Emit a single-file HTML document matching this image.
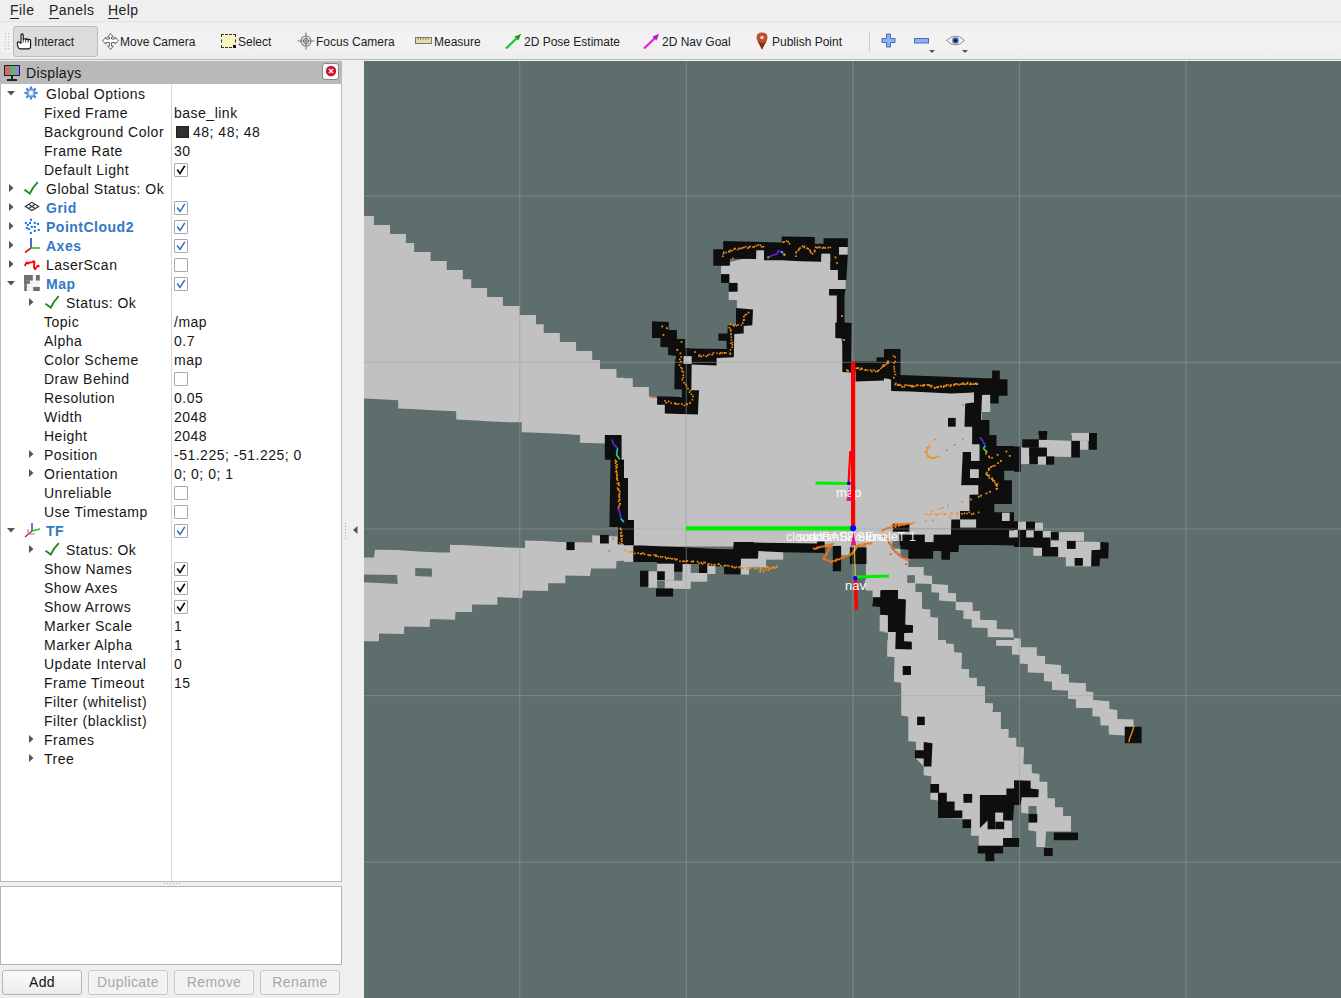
<!DOCTYPE html>
<html><head><meta charset="utf-8">
<style>
*{margin:0;padding:0}
html,body{width:1341px;height:998px;overflow:hidden;background:#efefef;position:relative;font-family:"Liberation Sans",sans-serif;color:#111}
.abs{position:absolute}
.menu{position:absolute;top:0;font-size:14px;letter-spacing:0.45px;line-height:21px;color:#222}
.menu u{text-decoration:none;border-bottom:1px solid #222}
.tb{position:absolute;top:34px;font-size:12px;line-height:16px;color:#222;white-space:nowrap}
.tt{position:absolute;font-size:14px;letter-spacing:0.5px;line-height:19px;margin-top:1px;white-space:nowrap;color:#161616}
.tt.blue{color:#3079c8;font-weight:bold;letter-spacing:0.5px}
.cb{position:absolute;width:14px;height:14px;border:1px solid #a8a8a8;box-sizing:border-box;background:#fff;border-radius:1px}
.btn{position:absolute;top:970px;height:25px;border:1px solid #b4b4b4;border-radius:3px;box-sizing:border-box;background:linear-gradient(#fbfbfb,#ececec);font-size:14px;letter-spacing:0.4px;line-height:23px;text-align:center}
</style></head><body>
<!-- menubar -->
<div class="menu" style="left:10px"><u>F</u>ile</div>
<div class="menu" style="left:49px"><u>P</u>anels</div>
<div class="menu" style="left:108px"><u>H</u>elp</div>
<div class="abs" style="left:0;top:21px;width:1341px;height:38px;background:linear-gradient(#efefef,#f3f3f3 50%,#ececec);border-top:1px solid #e2e2e2"></div>
<div class="abs" style="left:0;top:59px;width:1341px;height:1px;background:#bdbdbd"></div>
<!-- toolbar grip -->
<svg class="abs" style="left:5px;top:33px" width="6" height="18"><g fill="#b8b8b8"><rect x="0" y="0" width="1" height="1"/><rect x="3" y="0" width="1" height="1"/><rect x="0" y="3" width="1" height="1"/><rect x="3" y="3" width="1" height="1"/><rect x="0" y="6" width="1" height="1"/><rect x="3" y="6" width="1" height="1"/><rect x="0" y="9" width="1" height="1"/><rect x="3" y="9" width="1" height="1"/><rect x="0" y="12" width="1" height="1"/><rect x="3" y="12" width="1" height="1"/><rect x="0" y="15" width="1" height="1"/><rect x="3" y="15" width="1" height="1"/></g></svg>
<div class="abs" style="left:13px;top:26px;width:85px;height:31px;border:1px solid #bcbcbc;border-radius:3px;box-sizing:border-box;background:#dcdcdc"></div>
<!-- hand icon -->
<svg class="abs" style="left:16px;top:33px" width="17" height="17" viewBox="0 0 17 17"><path d="M5 9 V2 Q5 0.9 6.1 0.9 Q7.2 0.9 7.2 2 V6.6 Q7.5 5.7 8.5 5.7 Q9.5 5.7 9.7 6.7 Q10 5.9 11 5.9 Q12 6 12.2 7 Q12.5 6.3 13.4 6.4 Q14.6 6.5 14.6 7.7 V13.6 Q14.6 15.8 12.6 15.8 H4.2 Q2.4 15.8 2.1 14 L1.3 10.6 Q1.1 9.2 2.3 8.9 Q3.4 8.7 5 10.4 Z" fill="#fff" stroke="#111" stroke-width="1.15" stroke-linejoin="round"/><path d="M7.2 6.6 V9.5 M9.7 6.7 V9.5 M12.2 7 V9.5" stroke="#111" stroke-width="0.8"/></svg>
<div class="tb" style="left:34px">Interact</div>
<!-- move camera icon -->
<svg class="abs" style="left:102px;top:33px" width="17" height="17" viewBox="0 0 17 17"><g fill="#fff" stroke="#666" stroke-width="1"><path d="M8.5 0.5 L11.5 4 H9.5 V6 H13 V4 L16.5 8 L13 11 V9.5 H9.5 V13 H11.5 L8.5 16.5 L5.5 13 H7.5 V9.5 H4 V11 L0.5 8 L4 4 V6 H7.5 V4 H5.5 Z"/></g></svg>
<div class="tb" style="left:120px">Move Camera</div>
<!-- select icon -->
<div class="abs" style="left:221px;top:34px;width:15px;height:14px;background:#fbf7c0;border:1px dashed #333;box-sizing:border-box"></div>
<div class="abs" style="left:233px;top:45px;width:3px;height:3px;background:#111"></div>
<div class="tb" style="left:238px">Select</div>
<!-- focus icon -->
<svg class="abs" style="left:297px;top:32px" width="18" height="18" viewBox="0 0 18 18"><g fill="none" stroke="#777" stroke-width="1.1"><circle cx="9" cy="9" r="5"/><circle cx="9" cy="9" r="2.5"/><path d="M9 0.5 V17.5 M0.5 9 H17.5"/></g></svg>
<div class="tb" style="left:316px">Focus Camera</div>
<!-- measure icon -->
<svg class="abs" style="left:415px;top:36px" width="17" height="9" viewBox="0 0 17 9"><rect x="0.5" y="1.5" width="16" height="6" fill="#e8dca0" stroke="#777" stroke-width="1"/><path d="M3 2 V4 M5.5 2 V4 M8 2 V4 M10.5 2 V4 M13 2 V4" stroke="#777" stroke-width="0.8"/></svg>
<div class="tb" style="left:434px">Measure</div>
<!-- 2D pose icon -->
<svg class="abs" style="left:505px;top:33px" width="17" height="17" viewBox="0 0 17 17"><path d="M1 15.5 L12 5" stroke="#22c022" stroke-width="2.2"/><path d="M16 1 L9.5 3.5 L13.5 7.5 Z" fill="#1d9e1d"/></svg>
<div class="tb" style="left:524px">2D Pose Estimate</div>
<svg class="abs" style="left:643px;top:33px" width="17" height="17" viewBox="0 0 17 17"><path d="M1 15.5 L12 5" stroke="#e020e0" stroke-width="2.2"/><path d="M16 1 L9.5 3.5 L13.5 7.5 Z" fill="#c010c0"/></svg>
<div class="tb" style="left:662px">2D Nav Goal</div>
<svg class="abs" style="left:756px;top:32px" width="12" height="18" viewBox="0 0 12 18"><path d="M6 17.5 L1.5 9 Q0.5 7 0.5 5.5 Q0.5 0.5 6 0.5 Q11.5 0.5 11.5 5.5 Q11.5 7 10.5 9 Z" fill="#c0502a"/><path d="M6 17.5 L1.5 9 Q3 11 6 11 Q9 11 10.5 9 Z" fill="#7a3515"/><circle cx="6" cy="5.5" r="1.8" fill="#f0d0c0"/></svg>
<div class="tb" style="left:772px">Publish Point</div>
<div class="abs" style="left:869px;top:32px;width:1px;height:20px;background:#cfcfcf"></div>
<svg class="abs" style="left:881px;top:33px" width="15" height="15" viewBox="0 0 15 15"><path d="M5.5 1 H9.5 V5.5 H14 V9.5 H9.5 V14 H5.5 V9.5 H1 V5.5 H5.5 Z" fill="#8fb0e8" stroke="#3f6fc0" stroke-width="1"/></svg>
<svg class="abs" style="left:914px;top:38px" width="15" height="6" viewBox="0 0 15 6"><rect x="0.5" y="0.5" width="14" height="4.5" fill="#8fb0e8" stroke="#3f6fc0" stroke-width="1"/></svg>
<svg class="abs" style="left:929px;top:50px" width="6" height="4"><path d="M0 0 H6 L3 3 Z" fill="#555"/></svg>
<svg class="abs" style="left:946px;top:35px" width="19" height="11" viewBox="0 0 19 11"><path d="M0.5 5.5 Q9.5 -3.5 18.5 5.5 Q9.5 14.5 0.5 5.5 Z" fill="#f4f4f4" stroke="#8a8a8a" stroke-width="1"/><circle cx="9.5" cy="5.5" r="3.3" fill="#4a64c0"/><circle cx="9.5" cy="5.5" r="1.5" fill="#111"/></svg>
<svg class="abs" style="left:962px;top:50px" width="6" height="4"><path d="M0 0 H6 L3 3 Z" fill="#555"/></svg>

<!-- Displays panel header -->
<div class="abs" style="left:0;top:61px;width:342px;height:23px;background:#b9b9b9"></div>
<svg class="abs" style="left:3px;top:64px" width="18" height="18" viewBox="0 0 18 18"><rect x="1" y="1" width="16" height="11" fill="#222"/><rect x="2" y="2" width="5" height="9" fill="#d06a6a"/><rect x="7" y="2" width="5" height="9" fill="#6ab06a"/><rect x="12" y="2" width="4" height="9" fill="#8a8ad8"/><rect x="8" y="12" width="2" height="3" fill="#222"/><rect x="4" y="15" width="10" height="2" fill="#222"/></svg>
<div class="abs" style="left:26px;top:63px;font-size:14px;letter-spacing:0.35px;line-height:21px;color:#161616">Displays</div>
<div class="abs" style="left:322px;top:63px;width:17px;height:17px;border:1px solid #888;border-radius:3px;box-sizing:border-box;background:#fafafa"></div>
<svg class="abs" style="left:325px;top:65px" width="12" height="12" viewBox="0 0 12 12"><circle cx="6" cy="6" r="5.2" fill="#d0142a"/><path d="M4 4 L8 8 M8 4 L4 8" stroke="#fff" stroke-width="1.3"/></svg>
<!-- tree view -->
<div class="abs" style="left:0;top:84px;width:342px;height:798px;background:#fff;border:1px solid #b9b9b9;border-top:none;box-sizing:border-box"></div>
<div class="abs" style="left:171px;top:84px;width:1px;height:797px;background:#d8d8d8"></div>
<svg style="position:absolute;left:7px;top:91px" width="9" height="5" viewBox="0 0 9 5"><path d="M0 0 H8 L4 4.5 Z" fill="#555"/></svg>
<svg style="position:absolute;left:24px;top:86px" width="14" height="14" viewBox="0 0 14 14"><rect x="5.9" y="0.4" width="2.2" height="3" fill="#4a86d8" transform="rotate(0 7 7)"/><rect x="5.9" y="0.4" width="2.2" height="3" fill="#4a86d8" transform="rotate(45 7 7)"/><rect x="5.9" y="0.4" width="2.2" height="3" fill="#4a86d8" transform="rotate(90 7 7)"/><rect x="5.9" y="0.4" width="2.2" height="3" fill="#4a86d8" transform="rotate(135 7 7)"/><rect x="5.9" y="0.4" width="2.2" height="3" fill="#4a86d8" transform="rotate(180 7 7)"/><rect x="5.9" y="0.4" width="2.2" height="3" fill="#4a86d8" transform="rotate(225 7 7)"/><rect x="5.9" y="0.4" width="2.2" height="3" fill="#4a86d8" transform="rotate(270 7 7)"/><rect x="5.9" y="0.4" width="2.2" height="3" fill="#4a86d8" transform="rotate(315 7 7)"/><circle cx="7" cy="7" r="4.6" fill="#4a86d8"/><circle cx="7" cy="7" r="3.4" fill="#9cc0ee"/><circle cx="7" cy="7" r="1.9" fill="#fff"/></svg>
<div class="tt" style="left:46px;top:84px">Global Options</div>
<div class="tt" style="left:44px;top:103px">Fixed Frame</div>
<div class="tt" style="left:174px;top:103px">base_link</div>
<div class="tt" style="left:44px;top:122px">Background Color</div>
<div style="position:absolute;left:176px;top:126px;width:13px;height:12px;background:#303030;border:1px solid #222;box-sizing:border-box"></div>
<div class="tt" style="left:193px;top:122px">48; 48; 48</div>
<div class="tt" style="left:44px;top:141px">Frame Rate</div>
<div class="tt" style="left:174px;top:141px">30</div>
<div class="tt" style="left:44px;top:160px">Default Light</div>
<div class="cb" style="left:174px;top:163px"></div><svg style="position:absolute;left:176px;top:165px" width="10" height="10" viewBox="0 0 10 10"><path d="M1.2 4.5 L4 8.5 L8.8 0.8" fill="none" stroke="#111" stroke-width="1.7"/></svg>
<svg style="position:absolute;left:9px;top:184px" width="5" height="9" viewBox="0 0 5 9"><path d="M0 0 V8 L4.5 4 Z" fill="#555"/></svg>
<svg style="position:absolute;left:23px;top:181px" width="16" height="15" viewBox="0 0 16 15"><path d="M1.5 8.8 L6.8 12.6 Q9 7 14.8 1.2" fill="none" stroke="#1e8a1e" stroke-width="1.9"/></svg>
<div class="tt" style="left:46px;top:179px">Global Status: Ok</div>
<svg style="position:absolute;left:9px;top:203px" width="5" height="9" viewBox="0 0 5 9"><path d="M0 0 V8 L4.5 4 Z" fill="#555"/></svg>
<svg style="position:absolute;left:0;top:198px" width="45" height="19" viewBox="0 0 45 19"><g fill="none" stroke="#333" stroke-width="1.15"><path d="M25.3 8.4 L31.8 4.3 L38.7 8.4 L31.8 12.5 Z"/><path d="M28.5 6.3 L35.2 10.5 M35.2 6.3 L28.5 10.5"/></g></svg>
<div class="tt blue" style="left:46px;top:198px">Grid</div>
<div class="cb" style="left:174px;top:201px"></div><svg style="position:absolute;left:176px;top:203px" width="10" height="10" viewBox="0 0 10 10"><path d="M1.2 4.5 L4 8.5 L8.8 0.8" fill="none" stroke="#2f6fc0" stroke-width="1.5"/></svg>
<svg style="position:absolute;left:9px;top:222px" width="5" height="9" viewBox="0 0 5 9"><path d="M0 0 V8 L4.5 4 Z" fill="#555"/></svg>
<svg style="position:absolute;left:0;top:217px" width="45" height="19" viewBox="0 0 45 19"><rect x="30.0" y="1.8" width="2" height="2" fill="#0a6cf0"/><rect x="24.8" y="4.9" width="2" height="2" fill="#0a6cf0"/><rect x="29.0" y="4.9" width="2" height="2" fill="#0a6cf0"/><rect x="33.8" y="4.9" width="2" height="2" fill="#0a6cf0"/><rect x="37.0" y="5.9" width="2" height="2" fill="#0a6cf0"/><rect x="26.8" y="6.9" width="2" height="2" fill="#0a6cf0"/><rect x="30.8" y="8.9" width="2" height="2" fill="#0a6cf0"/><rect x="33.8" y="8.9" width="2" height="2" fill="#0a6cf0"/><rect x="25.8" y="9.9" width="2" height="2" fill="#0a6cf0"/><rect x="27.8" y="11.1" width="2" height="2" fill="#0a6cf0"/><rect x="37.8" y="11.9" width="2" height="2" fill="#0a6cf0"/><rect x="33.8" y="12.9" width="2" height="2" fill="#0a6cf0"/><rect x="29.8" y="14.9" width="2" height="2" fill="#0a6cf0"/></svg>
<div class="tt blue" style="left:46px;top:217px">PointCloud2</div>
<div class="cb" style="left:174px;top:220px"></div><svg style="position:absolute;left:176px;top:222px" width="10" height="10" viewBox="0 0 10 10"><path d="M1.2 4.5 L4 8.5 L8.8 0.8" fill="none" stroke="#2f6fc0" stroke-width="1.5"/></svg>
<svg style="position:absolute;left:9px;top:241px" width="5" height="9" viewBox="0 0 5 9"><path d="M0 0 V8 L4.5 4 Z" fill="#555"/></svg>
<svg style="position:absolute;left:24px;top:237px" width="17" height="17" viewBox="0 0 17 17"><path d="M7 1 V11" stroke="#1f3fc8" stroke-width="1.6"/><path d="M7 11 L1 15.5" stroke="#e02020" stroke-width="1.8"/><path d="M7 11 L16 11" stroke="#22c022" stroke-width="1.6"/></svg>
<div class="tt blue" style="left:46px;top:236px">Axes</div>
<div class="cb" style="left:174px;top:239px"></div><svg style="position:absolute;left:176px;top:241px" width="10" height="10" viewBox="0 0 10 10"><path d="M1.2 4.5 L4 8.5 L8.8 0.8" fill="none" stroke="#2f6fc0" stroke-width="1.5"/></svg>
<svg style="position:absolute;left:9px;top:260px" width="5" height="9" viewBox="0 0 5 9"><path d="M0 0 V8 L4.5 4 Z" fill="#555"/></svg>
<svg style="position:absolute;left:0;top:255px" width="45" height="19" viewBox="0 0 45 19"><polyline points="24.8,11 26,8.6 26.8,7.4 28.4,8.6 29.6,7.4 32,7.4 33.2,6.4 34.4,6.4 34,12.6 35.2,14.2 36.8,11.8 38,10.6 39.4,11.8" fill="none" stroke="#ff0000" stroke-width="1.9" stroke-linejoin="round"/></svg>
<div class="tt" style="left:46px;top:255px">LaserScan</div>
<div class="cb" style="left:174px;top:258px"></div>
<svg style="position:absolute;left:7px;top:281px" width="9" height="5" viewBox="0 0 9 5"><path d="M0 0 H8 L4 4.5 Z" fill="#555"/></svg>
<svg style="position:absolute;left:0;top:274px" width="45" height="19" viewBox="0 0 45 19"><rect x="24.2" y="1" width="15.6" height="16" fill="#fafafa"/><g stroke="#d8d8d8" stroke-width="0.5"><path d="M24.2 5 H39.8 M24.2 9 H39.8 M24.2 13 H39.8 M28.1 1 V17 M32 1 V17 M35.9 1 V17"/></g><g fill="#6f6f6f"><rect x="24.2" y="1" width="8.6" height="5.6"/><rect x="24.2" y="6.6" width="5.8" height="3.2"/><rect x="24.2" y="1" width="2.6" height="16"/><rect x="36" y="1" width="3.8" height="5.6"/><rect x="33.2" y="13" width="6.6" height="4"/></g></svg>
<div class="tt blue" style="left:46px;top:274px">Map</div>
<div class="cb" style="left:174px;top:277px"></div><svg style="position:absolute;left:176px;top:279px" width="10" height="10" viewBox="0 0 10 10"><path d="M1.2 4.5 L4 8.5 L8.8 0.8" fill="none" stroke="#2f6fc0" stroke-width="1.5"/></svg>
<svg style="position:absolute;left:29px;top:298px" width="5" height="9" viewBox="0 0 5 9"><path d="M0 0 V8 L4.5 4 Z" fill="#555"/></svg>
<svg style="position:absolute;left:44px;top:295px" width="16" height="15" viewBox="0 0 16 15"><path d="M1.5 8.8 L6.8 12.6 Q9 7 14.8 1.2" fill="none" stroke="#1e8a1e" stroke-width="1.9"/></svg>
<div class="tt" style="left:66px;top:293px">Status: Ok</div>
<div class="tt" style="left:44px;top:312px">Topic</div>
<div class="tt" style="left:174px;top:312px">/map</div>
<div class="tt" style="left:44px;top:331px">Alpha</div>
<div class="tt" style="left:174px;top:331px">0.7</div>
<div class="tt" style="left:44px;top:350px">Color Scheme</div>
<div class="tt" style="left:174px;top:350px">map</div>
<div class="tt" style="left:44px;top:369px">Draw Behind</div>
<div class="cb" style="left:174px;top:372px"></div>
<div class="tt" style="left:44px;top:388px">Resolution</div>
<div class="tt" style="left:174px;top:388px">0.05</div>
<div class="tt" style="left:44px;top:407px">Width</div>
<div class="tt" style="left:174px;top:407px">2048</div>
<div class="tt" style="left:44px;top:426px">Height</div>
<div class="tt" style="left:174px;top:426px">2048</div>
<svg style="position:absolute;left:29px;top:450px" width="5" height="9" viewBox="0 0 5 9"><path d="M0 0 V8 L4.5 4 Z" fill="#555"/></svg>
<div class="tt" style="left:44px;top:445px">Position</div>
<div class="tt" style="left:174px;top:445px">-51.225; -51.225; 0</div>
<svg style="position:absolute;left:29px;top:469px" width="5" height="9" viewBox="0 0 5 9"><path d="M0 0 V8 L4.5 4 Z" fill="#555"/></svg>
<div class="tt" style="left:44px;top:464px">Orientation</div>
<div class="tt" style="left:174px;top:464px">0; 0; 0; 1</div>
<div class="tt" style="left:44px;top:483px">Unreliable</div>
<div class="cb" style="left:174px;top:486px"></div>
<div class="tt" style="left:44px;top:502px">Use Timestamp</div>
<div class="cb" style="left:174px;top:505px"></div>
<svg style="position:absolute;left:7px;top:528px" width="9" height="5" viewBox="0 0 9 5"><path d="M0 0 H8 L4 4.5 Z" fill="#555"/></svg>
<svg style="position:absolute;left:24px;top:522px" width="17" height="17" viewBox="0 0 17 17"><path d="M8 1 V9" stroke="#1f3fc8" stroke-width="1.4"/><path d="M8 9 L1 15" stroke="#e02020" stroke-width="1.5"/><path d="M8 9 L16 7" stroke="#22c022" stroke-width="1.4"/><path d="M4 12 V7 M4 12 L11 12" stroke="#888" stroke-width="1"/></svg>
<div class="tt blue" style="left:46px;top:521px">TF</div>
<div class="cb" style="left:174px;top:524px"></div><svg style="position:absolute;left:176px;top:526px" width="10" height="10" viewBox="0 0 10 10"><path d="M1.2 4.5 L4 8.5 L8.8 0.8" fill="none" stroke="#2f6fc0" stroke-width="1.5"/></svg>
<svg style="position:absolute;left:29px;top:545px" width="5" height="9" viewBox="0 0 5 9"><path d="M0 0 V8 L4.5 4 Z" fill="#555"/></svg>
<svg style="position:absolute;left:44px;top:542px" width="16" height="15" viewBox="0 0 16 15"><path d="M1.5 8.8 L6.8 12.6 Q9 7 14.8 1.2" fill="none" stroke="#1e8a1e" stroke-width="1.9"/></svg>
<div class="tt" style="left:66px;top:540px">Status: Ok</div>
<div class="tt" style="left:44px;top:559px">Show Names</div>
<div class="cb" style="left:174px;top:562px"></div><svg style="position:absolute;left:176px;top:564px" width="10" height="10" viewBox="0 0 10 10"><path d="M1.2 4.5 L4 8.5 L8.8 0.8" fill="none" stroke="#111" stroke-width="1.7"/></svg>
<div class="tt" style="left:44px;top:578px">Show Axes</div>
<div class="cb" style="left:174px;top:581px"></div><svg style="position:absolute;left:176px;top:583px" width="10" height="10" viewBox="0 0 10 10"><path d="M1.2 4.5 L4 8.5 L8.8 0.8" fill="none" stroke="#111" stroke-width="1.7"/></svg>
<div class="tt" style="left:44px;top:597px">Show Arrows</div>
<div class="cb" style="left:174px;top:600px"></div><svg style="position:absolute;left:176px;top:602px" width="10" height="10" viewBox="0 0 10 10"><path d="M1.2 4.5 L4 8.5 L8.8 0.8" fill="none" stroke="#111" stroke-width="1.7"/></svg>
<div class="tt" style="left:44px;top:616px">Marker Scale</div>
<div class="tt" style="left:174px;top:616px">1</div>
<div class="tt" style="left:44px;top:635px">Marker Alpha</div>
<div class="tt" style="left:174px;top:635px">1</div>
<div class="tt" style="left:44px;top:654px">Update Interval</div>
<div class="tt" style="left:174px;top:654px">0</div>
<div class="tt" style="left:44px;top:673px">Frame Timeout</div>
<div class="tt" style="left:174px;top:673px">15</div>
<div class="tt" style="left:44px;top:692px">Filter (whitelist)</div>
<div class="tt" style="left:44px;top:711px">Filter (blacklist)</div>
<svg style="position:absolute;left:29px;top:735px" width="5" height="9" viewBox="0 0 5 9"><path d="M0 0 V8 L4.5 4 Z" fill="#555"/></svg>
<div class="tt" style="left:44px;top:730px">Frames</div>
<svg style="position:absolute;left:29px;top:754px" width="5" height="9" viewBox="0 0 5 9"><path d="M0 0 V8 L4.5 4 Z" fill="#555"/></svg>
<div class="tt" style="left:44px;top:749px">Tree</div>
<!-- splitter dots -->
<svg class="abs" style="left:164px;top:882px" width="16" height="3"><g fill="#aaa"><rect x="0" y="1" width="1" height="1"/><rect x="3" y="1" width="1" height="1"/><rect x="6" y="1" width="1" height="1"/><rect x="9" y="1" width="1" height="1"/><rect x="12" y="1" width="1" height="1"/><rect x="15" y="1" width="1" height="1"/></g></svg>
<!-- description box -->
<div class="abs" style="left:0;top:886px;width:342px;height:79px;background:#fff;border:1px solid #b4b4b4;box-sizing:border-box"></div>
<div class="btn" style="left:2px;width:80px;color:#111">Add</div>
<div class="btn" style="left:88px;width:80px;color:#a8a8a8;background:#f2f2f2;border-color:#c8c8c8">Duplicate</div>
<div class="btn" style="left:174px;width:80px;color:#a8a8a8;background:#f2f2f2;border-color:#c8c8c8">Remove</div>
<div class="btn" style="left:260px;width:80px;color:#a8a8a8;background:#f2f2f2;border-color:#c8c8c8">Rename</div>
<!-- side splitter -->
<svg class="abs" style="left:345px;top:522px" width="2" height="18"><g fill="#a8a8a8"><rect x="0" y="1" width="1" height="1"/><rect x="0" y="4" width="1" height="1"/><rect x="0" y="7" width="1" height="1"/><rect x="0" y="10" width="1" height="1"/><rect x="0" y="13" width="1" height="1"/><rect x="0" y="16" width="1" height="1"/></g></svg>
<svg class="abs" style="left:353px;top:526px" width="5" height="8"><path d="M4.5 0 V8 L0 4 Z" fill="#555"/></svg>
<!-- 3D view -->
<div class="abs" style="left:364px;top:61px;width:977px;height:937px;overflow:hidden;background:#5d6e6c">
<svg width="977" height="937" viewBox="364 61 977 937" style="position:absolute;left:0;top:0">
<g fill="#c1c1c1"><polygon points="364.0,216.1 373.9,216.1 373.9,224.9 390.0,224.9 390.0,234.0 405.9,234.0 405.9,243.0 414.1,243.0 414.1,252.0 430.6,252.0 430.6,261.1 446.7,261.1 446.7,270.1 462.8,270.1 462.8,279.2 471.2,279.2 471.2,288.0 487.1,288.0 487.1,297.0 502.9,297.0 502.9,306.1 519.7,306.1 519.7,314.9 536.0,314.9 536.0,324.2 543.7,324.2 543.7,333.0 559.8,333.0 559.8,342.0 576.1,342.0 576.1,351.1 592.2,351.1 592.2,360.1 600.0,360.1 600.0,368.9 616.5,368.9 616.5,377.7 624.0,377.7 624.0,435.1 579.0,435.1 564.7,434.0 543.7,432.9 521.7,432.2 521.7,422.3 509.5,422.3 487.5,421.2 466.5,420.1 456.2,419.6 456.2,411.3 432.4,410.2 411.4,409.1 398.2,408.6 398.2,400.2 375.0,399.1 364.0,398.5"/><polygon points="624.0,378.2 632.8,378.2 632.8,387.0 648.9,387.0 648.9,396.3 668.1,400.2 683.5,395.8 682.4,367.2 688.0,359.4 725.4,356.1 729.9,329.7 740.9,318.6 736.9,307.6 736.9,299.9 728.7,299.9 728.7,291.7 733.2,287.8 725.4,279.0 721.0,274.1 721.0,266.2 727.6,262.4 756.3,255.8 764.0,255.8 787.2,254.7 818.1,256.9 835.7,256.9 842.3,270.1 845.6,280.1 845.6,288.9 839.0,292.2 840.1,307.6 841.2,338.5 846.7,369.4 884.0,373.8 884.0,435.1 624.0,435.1"/><polygon points="884.0,373.8 892.8,382.6 976.6,389.2 982.1,394.7 990.3,394.7 990.3,411.9 982.1,411.9 981.0,435.1 884.0,435.1"/><polygon points="1071.4,432.9 1089.1,432.9 1089.1,435.1 1071.4,435.1"/><polygon points="364.0,557.4 373.9,557.4 375.0,549.7 397.1,550.1 418.0,551.4 440.1,552.5 450.0,552.5 450.0,544.8 467.6,545.3 488.6,546.4 509.5,547.5 525.0,547.9 525.0,540.4 544.8,540.9 560.3,542.0 592.2,542.6 592.2,535.3 617.6,536.4 617.6,544.2 624.0,544.2 624.0,560.7 616.5,561.1 616.1,568.4 591.1,568.4 590.0,576.1 565.3,575.5 565.3,583.2 548.1,583.2 548.1,591.1 522.8,590.5 522.3,598.2 497.4,597.1 497.4,604.8 472.1,604.4 472.1,611.9 455.5,611.9 455.1,619.8 430.2,619.1 429.5,626.9 404.4,626.4 403.7,634.1 379.0,633.5 379.0,641.2 364.0,641.2"/><polygon points="580.1,435.0 605.5,435.0 605.5,443.4 580.1,442.7"/><polygon points="617.6,435.0 624.0,435.0 624.0,544.2 617.6,544.2"/><polygon points="624.0,435.0 884.0,435.0 884.0,546.4 624.0,546.4"/><polygon points="624.0,544.8 633.4,544.8 633.4,561.9 624.0,561.9"/><polygon points="657.1,563.6 674.2,563.6 674.2,580.6 657.1,580.6"/><polygon points="648.3,571.3 657.1,571.3 657.1,587.8 648.3,587.8"/><polygon points="664.8,580.6 690.2,580.6 690.2,588.9 664.8,588.9"/><polygon points="682.4,564.1 690.7,564.1 690.7,588.9 682.4,588.9"/><polygon points="690.2,572.9 707.2,572.9 707.2,581.7 690.2,581.7"/><polygon points="707.2,565.2 715.5,565.2 715.5,574.0 707.2,574.0"/><polygon points="740.9,558.6 754.0,558.6 754.0,567.4 740.9,567.4"/><polygon points="740.9,567.4 749.1,567.4 749.1,574.6 740.9,574.6"/><polygon points="754.0,520.0 884.0,520.0 884.0,542.6 754.0,542.6"/><polygon points="757.9,550.9 783.2,550.9 783.2,559.7 757.9,559.7"/><polygon points="754.0,558.6 766.1,558.6 766.1,567.4 754.0,567.4"/><polygon points="841.1,543.7 849.9,543.7 849.9,555.3 841.1,555.3"/><polygon points="865.9,542.1 884.0,542.1 884.0,590.6 865.9,590.6"/><polygon points="872.5,590.6 884.0,590.6 884.0,597.2 872.5,597.2"/><polygon points="879.7,614.8 884.0,614.8 884.0,630.0 879.7,630.0"/><polygon points="884.0,435.0 972.2,435.0 972.2,528.7 884.0,528.7"/><polygon points="884.0,528.7 899.7,528.7 899.7,545.0 884.0,545.0"/><polygon points="899.7,528.7 951.0,528.7 951.0,534.7 899.7,534.7"/><polygon points="1020.8,447.0 1029.4,447.0 1029.4,464.1 1020.8,464.1"/><polygon points="1038.0,439.8 1063.6,440.4 1071.9,440.9 1071.3,456.9 1046.5,456.4 1046.5,448.1 1038.0,447.6"/><polygon points="1038.0,456.4 1046.0,456.4 1046.0,464.7 1038.0,464.7"/><polygon points="1071.9,433.0 1089.0,433.0 1089.0,440.9 1071.9,440.9"/><polygon points="1079.9,440.9 1087.9,440.9 1087.9,449.8 1079.9,449.8"/><polygon points="1017.9,522.0 1026.1,522.0 1026.1,530.0 1017.9,530.0"/><polygon points="1034.9,523.1 1042.9,523.1 1042.9,530.0 1034.9,530.0"/><polygon points="884.0,541.0 900.5,541.0 900.5,549.3 908.3,549.8 908.3,566.9 923.7,566.9 923.7,575.2 932.0,576.1 932.0,584.0 948.0,584.9 948.0,593.1 955.9,593.7 955.9,601.7 972.2,602.8 972.2,611.0 979.9,611.6 979.9,619.9 996.5,620.6 996.5,629.2 1013.0,629.8 1014.0,640.0 884.0,640.0"/><polygon points="1017.9,521.7 1026.1,521.7 1026.1,529.9 1017.9,529.9"/><polygon points="1034.9,522.8 1042.9,522.8 1042.9,530.5 1034.9,530.5"/><polygon points="1014.0,529.9 1017.9,529.9 1017.9,537.6 1014.0,537.6"/><polygon points="1026.1,530.5 1033.8,530.5 1033.8,538.7 1026.1,538.7"/><polygon points="1042.7,531.0 1050.9,531.0 1050.9,539.8 1042.7,539.8"/><polygon points="1058.7,532.1 1084.0,532.1 1084.0,540.9 1058.7,540.9"/><polygon points="1050.4,540.4 1100.0,542.1 1100.0,549.8 1091.7,550.3 1091.2,557.5 1058.1,556.9 1058.1,548.7 1050.4,547.6"/><polygon points="1033.3,547.6 1042.1,547.6 1042.1,555.8 1033.3,555.8"/><polygon points="1065.8,556.9 1091.2,556.9 1091.2,566.3 1065.8,566.3"/><polygon points="864.9,580.0 906.8,580.0 906.8,582.8 915.1,583.3 915.1,591.6 922.8,592.1 922.3,609.2 930.6,609.8 930.0,617.5 938.3,618.0 937.7,635.1 946.0,635.7 946.0,643.4 953.7,644.0 954.3,652.2 962.0,652.8 961.4,668.8 969.1,669.3 968.6,677.6 974.0,678.1 974.0,690.0 901.9,690.0 901.9,682.5 894.2,682.0 894.7,657.2 887.0,656.6 887.6,631.8 879.8,631.3 880.4,615.3 880.4,607.0 872.1,606.5 873.2,598.2 873.2,589.9 864.9,588.8"/><polygon points="915.1,580.0 932.2,580.0 932.2,584.4 947.6,585.0 947.6,592.7 955.9,593.2 955.9,602.1 972.5,602.6 972.5,610.9 974.0,610.9 974.0,627.4 971.9,627.4 972.5,618.6 964.2,618.6 964.2,610.9 955.9,610.3 955.9,600.9 938.8,600.4 939.4,592.1 931.1,591.6 931.7,583.3 915.1,582.8"/><polygon points="974.0,611.0 980.1,611.0 980.1,619.8 996.6,620.4 996.6,629.2 1012.6,629.8 1012.6,638.0 1020.9,638.4 1020.9,647.2 1036.8,647.2 1036.8,656.0 1045.1,656.2 1045.1,665.1 1061.1,665.3 1061.1,674.1 1068.8,674.4 1068.8,682.7 1085.9,683.2 1085.9,691.7 1093.1,692.1 1093.1,700.3 1104.0,700.9 1104.0,710.0 1093.1,710.0 1093.1,708.1 1076.0,707.8 1076.0,699.2 1068.3,698.7 1068.3,690.6 1052.3,689.9 1052.3,681.6 1044.0,681.0 1044.0,673.0 1028.0,672.2 1028.0,664.0 1020.1,663.1 1020.1,654.9 1012.0,654.6 1012.0,646.1 996.1,645.8 996.1,637.3 988.1,636.9 988.1,628.4 974.0,628.1"/><polygon points="974.0,677.7 976.8,677.7 976.8,686.0 985.0,686.6 985.0,703.1 993.0,703.6 993.0,710.0 974.0,710.0"/><polygon points="887.3,655.0 961.2,655.0 961.2,669.3 968.9,669.3 968.9,678.2 976.6,678.2 976.6,687.0 985.0,687.0 985.0,703.5 992.5,703.5 992.5,711.9 1000.9,711.9 1000.9,728.9 1008.6,728.9 1008.6,737.7 1016.3,737.7 1016.3,746.5 1024.0,747.6 1023.4,764.2 1031.8,764.2 1031.8,773.0 1039.5,774.1 1039.5,781.8 1047.2,781.8 1047.6,798.3 1054.9,798.3 1054.9,807.2 1063.1,807.2 1063.1,816.0 1071.0,816.0 1071.0,831.4 1046.1,831.4 1045.0,846.9 1036.2,846.9 1036.2,831.4 1028.4,830.3 1028.4,813.8 1021.2,812.7 1021.2,805.0 1011.9,805.0 1011.9,838.0 1003.1,838.0 1003.1,845.8 978.8,845.8 978.8,835.8 971.1,835.8 971.1,828.1 962.3,828.1 962.3,819.3 938.0,818.2 938.0,800.5 930.3,799.4 931.4,776.3 923.7,775.2 923.7,766.4 916.0,758.6 916.0,742.1 908.3,741.0 908.3,716.7 901.2,715.6 901.2,682.6 893.9,681.5 895.0,656.1"/><polygon points="1019.6,655.0 1043.9,656.1 1043.9,663.8 1060.4,664.9 1060.4,673.7 1068.8,674.4 1068.8,682.6 1085.1,683.2 1085.8,691.4 1093.1,692.5 1093.1,700.2 1109.4,701.3 1109.4,709.0 1117.3,710.1 1117.3,719.0 1133.6,719.4 1133.6,727.8 1124.8,727.8 1124.8,735.5 1108.9,734.4 1108.5,725.6 1100.6,725.6 1100.1,716.7 1092.4,716.3 1092.4,707.9 1075.9,707.5 1075.9,699.1 1068.1,698.7 1068.1,690.3 1052.0,689.8 1052.0,681.5 1043.9,681.0 1043.9,672.6 1027.8,672.2 1027.8,663.8 1019.6,663.4"/></g>
<g fill="#5d6e6c"><polygon points="415.2,568.0 431.9,568.4 431.9,576.8 415.2,576.1"/><polygon points="364.0,574.4 397.1,575.0 397.7,583.9 364.0,582.3"/><polygon points="915.4,583.5 931.4,584.0 931.4,592.3 939.1,592.8 939.1,600.6 955.7,601.7 955.7,609.9 963.4,610.5 963.4,618.8 971.7,619.3 971.7,627.6 987.6,628.1 987.6,637.0 1014.0,637.5 1014.0,640.0 938.0,640.0 938.0,617.7 930.3,617.1 930.3,609.4 922.0,608.8 922.0,592.3 915.4,591.7"/><polygon points="892.3,541.0 900.5,541.0 900.5,548.7 892.3,548.7"/><polygon points="900.5,549.3 908.3,549.3 908.3,558.1 900.5,558.1"/><polygon points="907.2,575.2 914.9,575.2 914.9,582.9 907.2,582.9"/><polygon points="884.0,632.5 887.9,632.5 887.9,640.0 884.0,640.0"/><polygon points="1028.4,806.1 1036.6,806.1 1036.6,813.8 1028.4,813.8"/></g>
<g fill="#0e0e0e"><polygon points="713.3,249.2 723.2,249.2 723.2,241.0 781.7,242.6 781.7,236.4 814.8,237.1 814.8,243.7 823.6,243.7 823.6,238.2 847.8,238.2 847.8,254.7 846.3,280.1 837.9,280.1 837.9,270.1 830.2,270.1 830.2,254.7 821.4,254.7 821.4,261.8 800.4,261.3 781.7,260.2 764.0,260.2 764.0,251.4 756.3,251.4 756.3,259.1 729.9,258.7 729.9,265.7 713.3,265.7"/><polygon points="721.0,274.1 729.4,274.1 729.4,282.9 721.0,282.9"/><polygon points="728.7,282.9 737.6,282.9 737.6,291.7 728.7,291.7"/><polygon points="652.0,321.3 668.8,322.0 668.8,330.1 676.9,330.1 676.9,338.9 685.1,338.9 685.1,347.8 691.7,348.4 726.5,348.9 726.5,340.7 718.4,340.7 718.4,333.4 727.6,333.4 727.6,325.3 736.0,325.3 736.0,308.1 753.0,309.4 752.3,325.3 743.7,325.9 743.7,333.6 734.3,334.1 733.8,357.2 716.6,357.9 716.6,365.4 691.7,364.5 691.3,390.3 699.0,390.3 697.9,414.6 664.8,413.5 664.8,404.7 657.1,404.7 657.1,396.3 681.8,396.9 681.8,389.2 674.3,389.2 674.7,362.8 676.3,356.1 668.1,355.0 668.1,347.3 660.4,346.9 660.4,338.1 652.0,338.1"/><polygon points="829.1,288.9 845.6,288.9 844.5,295.5 844.5,322.4 851.6,323.1 851.1,361.6 876.5,361.6 876.5,357.2 884.0,357.2 884.0,380.4 855.6,381.5 855.6,372.7 842.3,372.0 842.3,338.5 835.3,338.1 835.3,322.4 836.8,322.4 836.8,295.5 829.1,295.5"/><polygon points="884.0,349.1 900.5,349.1 900.5,374.9 985.4,378.2 992.1,378.2 992.1,370.5 999.8,370.5 999.8,379.3 1007.5,379.3 1007.5,395.8 998.7,395.8 998.7,403.5 990.3,403.5 990.3,394.7 982.1,394.7 981.0,420.1 989.4,420.1 989.4,435.1 972.2,435.1 972.2,426.7 964.5,426.7 965.2,403.5 974.0,402.4 974.0,392.5 951.3,393.6 910.5,391.4 891.1,391.0 891.1,379.3 884.0,378.2"/><polygon points="948.0,417.9 955.7,417.9 955.7,426.7 948.0,426.7"/><polygon points="1038.4,431.1 1047.2,431.1 1047.2,435.1 1038.4,435.1"/><polygon points="1089.1,433.3 1096.8,433.3 1096.8,435.1 1089.1,435.1"/><polygon points="604.8,435.0 621.6,435.0 621.6,459.7 624.0,459.7 624.0,544.2 617.8,544.2 617.8,527.0 609.4,527.0 610.5,459.7 604.8,459.7"/><polygon points="566.4,542.0 574.6,542.0 574.6,550.1 566.4,550.1"/><polygon points="600.0,534.9 608.8,534.9 608.8,543.5 600.0,543.5"/><polygon points="624.0,478.0 628.0,478.0 628.0,519.9 633.9,519.9 633.9,545.3 624.0,545.3"/><polygon points="633.4,545.4 642.7,545.6 663.7,546.5 685.7,547.3 705.6,548.4 727.1,549.2 733.2,549.2 733.7,542.1 754.0,542.1 754.0,558.6 740.9,558.6 740.3,574.6 724.3,574.2 723.8,566.3 715.5,566.3 707.2,565.2 707.2,572.9 699.0,572.9 699.0,564.1 690.7,564.1 682.4,564.1 682.4,571.8 674.2,571.8 674.2,563.6 657.1,563.6 657.1,561.9 633.4,561.9"/><polygon points="640.0,570.7 648.3,570.7 648.3,586.7 640.0,586.7"/><polygon points="657.1,571.3 664.8,571.3 664.8,580.1 657.1,580.1"/><polygon points="656.0,588.4 673.1,588.4 673.1,596.6 656.0,596.6"/><polygon points="624.0,520.0 633.9,520.0 633.9,544.3 624.0,544.3"/><polygon points="754.0,542.6 816.8,543.4 817.4,541.5 824.6,541.5 825.1,553.1 783.2,552.2 758.4,551.1 757.9,558.6 754.0,558.6"/><polygon points="832.8,545.9 841.1,545.9 841.1,571.3 832.8,571.3"/><polygon points="849.9,547.6 866.5,547.6 866.5,564.1 849.9,564.1"/><polygon points="873.1,597.2 884.0,597.2 884.0,606.0 873.1,606.0"/><polygon points="880.3,590.6 884.0,590.6 884.0,614.8 880.3,614.8"/><polygon points="972.2,435.0 996.5,435.0 996.5,446.0 1014.0,446.0 1014.0,470.8 1004.2,470.8 1004.2,480.2 1011.9,480.2 1011.9,503.9 994.3,503.9 994.3,512.2 1014.0,512.2 1014.0,545.0 933.6,545.0 933.6,542.5 925.3,542.5 925.3,545.0 899.7,545.0 899.7,534.7 951.0,534.7 951.3,519.4 960.1,519.4 960.1,511.1 969.5,511.1 969.5,494.5 978.3,494.5 977.7,485.7 961.2,485.7 962.8,452.1 971.1,452.1 971.1,460.9 979.4,460.9 979.4,444.4 972.2,444.4"/><polygon points="892.8,523.8 909.4,523.8 909.4,531.7 892.8,531.7"/><polygon points="1014.0,446.5 1020.8,446.5 1020.8,471.8 1014.0,471.8"/><polygon points="1022.3,439.3 1038.8,439.3 1038.8,447.6 1022.3,447.6"/><polygon points="1039.1,431.0 1046.9,431.0 1046.9,439.8 1039.1,439.8"/><polygon points="1029.4,447.6 1046.9,447.6 1046.9,456.4 1029.4,456.4"/><polygon points="1029.4,447.6 1037.7,447.6 1037.7,464.1 1029.4,464.1"/><polygon points="1046.0,456.4 1054.2,456.4 1054.2,464.7 1046.0,464.7"/><polygon points="1071.3,440.9 1079.9,440.9 1079.9,457.5 1071.3,457.5"/><polygon points="1089.0,433.2 1096.9,433.2 1096.9,449.8 1089.0,449.8"/><polygon points="1014.0,521.4 1017.9,521.4 1017.9,530.0 1014.0,530.0"/><polygon points="1026.1,522.0 1034.9,522.0 1034.9,530.0 1026.1,530.0"/><polygon points="899.4,535.0 951.0,535.0 951.0,530.0 1009.1,530.0 1009.1,537.7 1014.0,537.7 1014.0,545.4 959.0,544.3 958.4,552.1 950.2,552.1 949.9,559.8 941.3,559.8 941.3,550.9 933.1,550.9 933.1,558.7 908.3,558.7 908.3,549.8 900.5,549.3"/><polygon points="884.0,590.1 897.8,590.1 897.8,598.9 905.5,599.5 904.9,624.8 912.7,625.4 912.7,632.5 903.8,632.5 903.8,640.0 896.1,640.0 896.1,632.0 887.9,632.0 887.9,614.9 884.0,614.9"/><polygon points="1014.0,521.7 1017.9,521.7 1017.9,529.9 1014.0,529.9"/><polygon points="1026.1,521.7 1034.9,521.7 1034.9,529.9 1026.1,529.9"/><polygon points="1017.9,529.9 1026.1,529.9 1026.1,547.0 1017.9,547.0"/><polygon points="1033.8,531.0 1042.7,531.0 1042.7,547.6 1033.8,547.6"/><polygon points="1050.9,532.1 1058.7,532.1 1058.7,539.8 1050.9,539.8"/><polygon points="1014.0,537.6 1050.4,537.6 1050.4,547.0 1014.0,547.0"/><polygon points="1042.1,547.0 1058.1,547.0 1058.1,556.4 1042.1,556.4"/><polygon points="1066.9,540.9 1075.7,540.9 1075.7,548.9 1066.9,548.9"/><polygon points="1074.6,558.0 1082.9,558.0 1082.9,565.8 1074.6,565.8"/><polygon points="1100.6,542.1 1108.8,542.6 1108.3,558.6 1100.0,558.6 1099.5,566.3 1091.2,566.3 1091.7,550.3 1100.6,549.8"/><polygon points="880.9,589.9 898.0,590.5 898.0,598.7 905.7,599.8 905.2,624.7 912.9,625.2 912.9,632.4 904.1,632.9 904.1,641.2 911.8,641.7 911.8,649.5 895.3,648.9 895.8,631.8 888.1,631.3 888.1,615.3 880.4,614.7 880.4,607.0 872.1,606.5 873.2,598.2 880.9,598.2"/><polygon points="903.0,666.0 910.7,666.0 910.7,674.8 903.0,674.8"/><polygon points="902.7,666.0 910.9,666.0 910.9,674.8 902.7,674.8"/><polygon points="917.1,716.7 924.8,716.7 924.8,725.1 917.1,725.1"/><polygon points="923.7,742.1 932.5,743.2 931.4,766.4 923.7,766.4 923.7,758.6 914.9,758.2 914.9,750.3 923.7,750.3"/><polygon points="930.3,784.0 939.1,784.0 939.1,792.8 930.3,792.8"/><polygon points="938.0,792.8 946.8,792.8 946.8,801.6 954.6,801.6 954.6,810.5 962.3,810.5 962.3,818.2 938.0,818.2"/><polygon points="962.3,819.3 971.1,819.3 971.1,828.1 962.3,828.1"/><polygon points="963.4,793.9 972.2,793.9 972.2,802.8 963.4,802.8"/><polygon points="979.9,795.0 1006.4,795.0 1006.4,788.4 1014.1,788.4 1014.1,780.3 1030.6,780.7 1030.6,788.4 1038.8,789.5 1038.4,797.2 1021.8,797.2 1020.7,805.0 1014.1,805.0 1013.0,820.4 1003.1,820.4 1003.1,812.7 995.4,812.7 995.4,829.2 987.6,829.2 987.6,820.4 979.9,828.1"/><polygon points="995.4,821.5 1004.2,821.5 1004.2,829.2 995.4,829.2"/><polygon points="1003.1,838.0 1019.6,838.0 1019.6,846.9 1003.1,846.9"/><polygon points="977.7,845.8 1003.1,845.8 1003.1,853.5 994.3,853.5 994.3,861.2 985.4,861.2 985.4,853.5 977.7,853.5"/><polygon points="1028.4,813.8 1037.3,813.8 1037.3,822.6 1028.4,822.6"/><polygon points="1053.8,832.5 1078.1,832.5 1078.1,840.2 1053.8,840.2"/><polygon points="1043.9,848.0 1052.7,848.0 1052.7,856.1 1043.9,856.1"/><polygon points="1124.8,726.7 1141.6,726.7 1141.6,743.2 1124.8,743.2"/></g>
<g fill="#c1c1c1"><polygon points="839.0,247.0 847.8,247.0 847.8,254.7 839.0,254.7"/><polygon points="683.5,356.1 691.7,356.1 691.7,363.9 683.5,363.9"/><polygon points="756.3,250.3 764.0,250.3 764.0,260.2 756.3,260.2"/><polygon points="821.4,253.6 830.2,253.6 830.2,261.8 821.4,261.8"/><polygon points="971.1,444.4 979.4,444.4 979.4,460.9 971.1,460.9"/><polygon points="961.2,485.2 978.3,485.2 978.3,494.5 961.2,494.5"/><polygon points="970.0,469.2 978.8,469.2 978.8,478.0 970.0,478.0"/><polygon points="1002.0,512.7 1009.7,512.7 1009.7,521.0 1002.0,521.0"/><polygon points="960.1,519.4 976.1,519.4 976.1,527.6 960.1,527.6"/><polygon points="1009.1,530.4 1014.0,530.4 1014.0,537.5 1009.1,537.5"/><polygon points="924.8,533.3 933.6,533.3 933.6,542.1 924.8,542.1"/><polygon points="995.4,812.7 1003.1,812.7 1003.1,821.5 995.4,821.5"/></g>
<g fill="#5d6e6c"></g>
<g stroke="#a0a0a4" stroke-opacity="0.45" stroke-width="1.2"><line x1="353.1" y1="61" x2="353.1" y2="998"/><line x1="364" y1="29.2" x2="1341" y2="29.2"/><line x1="519.7" y1="61" x2="519.7" y2="998"/><line x1="364" y1="195.8" x2="1341" y2="195.8"/><line x1="686.3" y1="61" x2="686.3" y2="998"/><line x1="364" y1="362.4" x2="1341" y2="362.4"/><line x1="852.9" y1="61" x2="852.9" y2="998"/><line x1="364" y1="529.0" x2="1341" y2="529.0"/><line x1="1019.5" y1="61" x2="1019.5" y2="998"/><line x1="364" y1="695.6" x2="1341" y2="695.6"/><line x1="1186.1" y1="61" x2="1186.1" y2="998"/><line x1="364" y1="862.2" x2="1341" y2="862.2"/><line x1="1352.7" y1="61" x2="1352.7" y2="998"/><line x1="364" y1="1028.8" x2="1341" y2="1028.8"/></g>
<g><rect x="722.0" y="255.5" width="1.6" height="1.6" fill="#f5961e"/>
<rect x="722.6" y="252.9" width="1.6" height="1.6" fill="#f39018"/>
<rect x="723.0" y="251.4" width="1.6" height="1.6" fill="#f08c14"/>
<rect x="725.2" y="251.8" width="1.6" height="1.6" fill="#f5961e"/>
<rect x="727.9" y="250.6" width="1.6" height="1.6" fill="#f5961e"/>
<rect x="728.7" y="251.0" width="1.6" height="1.6" fill="#f5961e"/>
<rect x="729.7" y="249.5" width="1.6" height="1.6" fill="#f39018"/>
<rect x="731.3" y="249.9" width="1.6" height="1.6" fill="#f08c14"/>
<rect x="733.4" y="248.3" width="1.6" height="1.6" fill="#f5961e"/>
<rect x="734.4" y="247.7" width="1.6" height="1.6" fill="#f08c14"/>
<rect x="736.9" y="248.8" width="1.6" height="1.6" fill="#ec8010"/>
<rect x="738.4" y="247.6" width="1.6" height="1.6" fill="#f08c14"/>
<rect x="739.6" y="247.8" width="1.6" height="1.6" fill="#f39018"/>
<rect x="741.3" y="247.2" width="1.6" height="1.6" fill="#f39018"/>
<rect x="742.9" y="246.8" width="1.6" height="1.6" fill="#f7a020"/>
<rect x="744.7" y="245.9" width="1.6" height="1.6" fill="#f5961e"/>
<rect x="747.2" y="247.3" width="1.6" height="1.6" fill="#f7a020"/>
<rect x="748.1" y="246.4" width="1.6" height="1.6" fill="#ec8010"/>
<rect x="749.2" y="245.8" width="1.6" height="1.6" fill="#f5961e"/>
<rect x="752.2" y="246.3" width="1.6" height="1.6" fill="#ec8010"/>
<rect x="753.4" y="245.9" width="1.6" height="1.6" fill="#f5961e"/>
<rect x="755.5" y="245.2" width="1.6" height="1.6" fill="#ec8010"/>
<rect x="757.3" y="244.0" width="1.6" height="1.6" fill="#f08c14"/>
<rect x="759.6" y="244.4" width="1.6" height="1.6" fill="#f08c14"/>
<rect x="760.8" y="246.0" width="1.6" height="1.6" fill="#ec8010"/>
<rect x="762.5" y="245.9" width="1.6" height="1.6" fill="#f7a020"/>
<rect x="782.3" y="241.4" width="1.6" height="1.6" fill="#f5961e"/>
<rect x="783.4" y="241.0" width="1.6" height="1.6" fill="#ec8010"/>
<rect x="785.8" y="240.3" width="1.6" height="1.6" fill="#f08c14"/>
<rect x="787.4" y="240.9" width="1.6" height="1.6" fill="#f08c14"/>
<rect x="788.7" y="242.9" width="1.6" height="1.6" fill="#f5961e"/>
<rect x="795.2" y="255.4" width="1.6" height="1.6" fill="#f39018"/>
<rect x="795.3" y="252.1" width="1.6" height="1.6" fill="#ec8010"/>
<rect x="795.6" y="251.0" width="1.6" height="1.6" fill="#f08c14"/>
<rect x="797.8" y="249.4" width="1.6" height="1.6" fill="#f39018"/>
<rect x="797.9" y="248.5" width="1.6" height="1.6" fill="#f5961e"/>
<rect x="799.2" y="247.3" width="1.6" height="1.6" fill="#f7a020"/>
<rect x="801.6" y="245.5" width="1.6" height="1.6" fill="#f5961e"/>
<rect x="803.7" y="245.3" width="1.6" height="1.6" fill="#ec8010"/>
<rect x="803.3" y="246.7" width="1.6" height="1.6" fill="#f7a020"/>
<rect x="806.1" y="247.4" width="1.6" height="1.6" fill="#f08c14"/>
<rect x="807.4" y="248.0" width="1.6" height="1.6" fill="#f39018"/>
<rect x="809.2" y="249.4" width="1.6" height="1.6" fill="#f5961e"/>
<rect x="809.4" y="250.6" width="1.6" height="1.6" fill="#f08c14"/>
<rect x="810.4" y="251.9" width="1.6" height="1.6" fill="#f39018"/>
<rect x="811.7" y="253.0" width="1.6" height="1.6" fill="#f08c14"/>
<rect x="813.9" y="250.8" width="1.6" height="1.6" fill="#f08c14"/>
<rect x="813.9" y="249.6" width="1.6" height="1.6" fill="#f5961e"/>
<rect x="814.9" y="246.4" width="1.6" height="1.6" fill="#f39018"/>
<rect x="816.3" y="247.0" width="1.6" height="1.6" fill="#f7a020"/>
<rect x="818.0" y="246.0" width="1.6" height="1.6" fill="#f08c14"/>
<rect x="819.3" y="246.8" width="1.6" height="1.6" fill="#f39018"/>
<rect x="821.8" y="247.3" width="1.6" height="1.6" fill="#f5961e"/>
<rect x="822.9" y="246.6" width="1.6" height="1.6" fill="#f08c14"/>
<rect x="824.4" y="247.2" width="1.6" height="1.6" fill="#f7a020"/>
<rect x="827.4" y="246.9" width="1.6" height="1.6" fill="#ec8010"/>
<rect x="829.5" y="246.6" width="1.6" height="1.6" fill="#f08c14"/>
<polyline points="768.2,257.4 772.6,255.2 777.1,254.0 778.2,250.7 782.7,252.9 784.4,254.6" fill="none" stroke="#6a20e0" stroke-width="1.6" stroke-linejoin="round"/>
<rect x="767.2" y="256.4" width="2" height="2" fill="#30e040"/>
<rect x="783.4" y="253.6" width="2" height="2" fill="#e0e020"/>
<rect x="781.0" y="251.0" width="2" height="2" fill="#20c0e0"/>
<rect x="834.6" y="256.5" width="1.8" height="1.8" fill="#f39018"/>
<rect x="732.1" y="257.6" width="1.8" height="1.8" fill="#f06018"/>
<rect x="661.3" y="325.5" width="1.8" height="1.8" fill="#f08c14"/>
<rect x="666.1" y="327.3" width="1.8" height="1.8" fill="#f39018"/>
<rect x="662.5" y="334.0" width="1.8" height="1.8" fill="#f39018"/>
<rect x="680.6" y="341.1" width="1.8" height="1.8" fill="#ec8010"/>
<rect x="676.4" y="349.0" width="1.8" height="1.8" fill="#f7a020"/>
<rect x="679.6" y="352.5" width="1.6" height="1.6" fill="#f5961e"/>
<rect x="680.4" y="356.2" width="1.6" height="1.6" fill="#f08c14"/>
<rect x="678.9" y="358.6" width="1.6" height="1.6" fill="#f7a020"/>
<rect x="680.0" y="360.8" width="1.6" height="1.6" fill="#f39018"/>
<rect x="678.8" y="364.2" width="1.6" height="1.6" fill="#f7a020"/>
<rect x="680.2" y="366.8" width="1.6" height="1.6" fill="#f39018"/>
<rect x="681.3" y="367.7" width="1.6" height="1.6" fill="#f39018"/>
<rect x="681.2" y="370.2" width="1.6" height="1.6" fill="#f08c14"/>
<rect x="682.5" y="371.3" width="1.6" height="1.6" fill="#f08c14"/>
<rect x="682.5" y="374.4" width="1.6" height="1.6" fill="#f7a020"/>
<rect x="682.3" y="376.9" width="1.6" height="1.6" fill="#f5961e"/>
<rect x="681.5" y="378.9" width="1.6" height="1.6" fill="#f5961e"/>
<rect x="683.2" y="381.8" width="1.6" height="1.6" fill="#f5961e"/>
<rect x="684.9" y="383.5" width="1.6" height="1.6" fill="#f39018"/>
<rect x="685.8" y="385.3" width="1.6" height="1.6" fill="#ec8010"/>
<rect x="687.1" y="387.8" width="1.6" height="1.6" fill="#f7a020"/>
<rect x="689.7" y="389.6" width="1.6" height="1.6" fill="#ec8010"/>
<rect x="688.8" y="391.4" width="1.6" height="1.6" fill="#f5961e"/>
<rect x="690.7" y="393.5" width="1.6" height="1.6" fill="#f7a020"/>
<rect x="692.1" y="395.6" width="1.6" height="1.6" fill="#f7a020"/>
<rect x="691.6" y="398.9" width="1.6" height="1.6" fill="#f08c14"/>
<rect x="689.3" y="401.9" width="1.6" height="1.6" fill="#f08c14"/>
<rect x="689.4" y="402.3" width="1.6" height="1.6" fill="#ec8010"/>
<rect x="686.5" y="403.6" width="1.6" height="1.6" fill="#f7a020"/>
<rect x="685.8" y="403.4" width="1.6" height="1.6" fill="#f39018"/>
<rect x="683.6" y="404.6" width="1.6" height="1.6" fill="#f39018"/>
<rect x="681.0" y="403.3" width="1.6" height="1.6" fill="#f08c14"/>
<rect x="677.7" y="403.0" width="1.6" height="1.6" fill="#f5961e"/>
<rect x="675.8" y="403.4" width="1.6" height="1.6" fill="#ec8010"/>
<rect x="674.8" y="403.4" width="1.6" height="1.6" fill="#ec8010"/>
<rect x="674.0" y="402.4" width="1.6" height="1.6" fill="#f7a020"/>
<rect x="670.3" y="402.4" width="1.6" height="1.6" fill="#ec8010"/>
<rect x="667.9" y="400.6" width="1.6" height="1.6" fill="#f5961e"/>
<rect x="665.6" y="402.0" width="1.6" height="1.6" fill="#f5961e"/>
<rect x="664.2" y="400.1" width="1.6" height="1.6" fill="#f39018"/>
<rect x="698.1" y="355.3" width="1.6" height="1.6" fill="#f5961e"/>
<rect x="698.8" y="354.2" width="1.6" height="1.6" fill="#f08c14"/>
<rect x="700.4" y="355.7" width="1.6" height="1.6" fill="#f7a020"/>
<rect x="702.6" y="354.6" width="1.6" height="1.6" fill="#f08c14"/>
<rect x="705.4" y="355.6" width="1.6" height="1.6" fill="#f5961e"/>
<rect x="707.0" y="354.6" width="1.6" height="1.6" fill="#f08c14"/>
<rect x="708.6" y="353.6" width="1.6" height="1.6" fill="#ec8010"/>
<rect x="711.5" y="353.9" width="1.6" height="1.6" fill="#f39018"/>
<rect x="712.6" y="352.1" width="1.6" height="1.6" fill="#f08c14"/>
<rect x="716.2" y="352.4" width="1.6" height="1.6" fill="#ec8010"/>
<rect x="719.0" y="353.0" width="1.6" height="1.6" fill="#f5961e"/>
<rect x="719.7" y="351.9" width="1.6" height="1.6" fill="#f08c14"/>
<rect x="721.6" y="352.3" width="1.6" height="1.6" fill="#f39018"/>
<rect x="723.7" y="352.1" width="1.6" height="1.6" fill="#f7a020"/>
<rect x="725.1" y="352.0" width="1.6" height="1.6" fill="#f5961e"/>
<rect x="729.3" y="353.2" width="1.6" height="1.6" fill="#f39018"/>
<rect x="729.6" y="352.5" width="1.6" height="1.6" fill="#f08c14"/>
<rect x="729.7" y="349.0" width="1.6" height="1.6" fill="#ec8010"/>
<rect x="731.2" y="346.5" width="1.6" height="1.6" fill="#f5961e"/>
<rect x="731.7" y="344.1" width="1.6" height="1.6" fill="#f39018"/>
<rect x="729.9" y="342.5" width="1.6" height="1.6" fill="#f08c14"/>
<rect x="731.5" y="341.7" width="1.6" height="1.6" fill="#f08c14"/>
<rect x="730.7" y="339.3" width="1.6" height="1.6" fill="#ec8010"/>
<rect x="730.5" y="336.5" width="1.6" height="1.6" fill="#f7a020"/>
<rect x="730.1" y="333.6" width="1.6" height="1.6" fill="#f39018"/>
<rect x="730.2" y="333.1" width="1.6" height="1.6" fill="#f08c14"/>
<rect x="730.1" y="330.1" width="1.6" height="1.6" fill="#f5961e"/>
<rect x="729.7" y="328.6" width="1.6" height="1.6" fill="#f08c14"/>
<rect x="728.5" y="326.8" width="1.6" height="1.6" fill="#f5961e"/>
<rect x="729.6" y="323.5" width="1.6" height="1.6" fill="#f5961e"/>
<rect x="732.5" y="324.4" width="1.6" height="1.6" fill="#f5961e"/>
<rect x="733.3" y="325.3" width="1.6" height="1.6" fill="#f39018"/>
<rect x="736.0" y="324.9" width="1.6" height="1.6" fill="#ec8010"/>
<rect x="737.4" y="323.9" width="1.6" height="1.6" fill="#f08c14"/>
<rect x="740.6" y="324.1" width="1.6" height="1.6" fill="#ec8010"/>
<rect x="742.0" y="322.1" width="1.6" height="1.6" fill="#f5961e"/>
<rect x="742.6" y="319.4" width="1.6" height="1.6" fill="#f08c14"/>
<rect x="743.4" y="319.1" width="1.6" height="1.6" fill="#f39018"/>
<rect x="743.1" y="315.9" width="1.6" height="1.6" fill="#f7a020"/>
<rect x="744.3" y="314.2" width="1.6" height="1.6" fill="#ec8010"/>
<rect x="745.8" y="313.6" width="1.6" height="1.6" fill="#ec8010"/>
<rect x="747.8" y="311.7" width="1.6" height="1.6" fill="#f7a020"/>
<rect x="650.0" y="396.6" width="1.5" height="1.5" fill="#f06018"/>
<rect x="652.5" y="396.4" width="1.5" height="1.5" fill="#f06018"/>
<rect x="654.9" y="396.1" width="1.5" height="1.5" fill="#f06018"/>
<rect x="694.2" y="351.2" width="1.6" height="1.6" fill="#f7a020"/>
<rect x="845.9" y="369.3" width="1.6" height="1.6" fill="#ec8010"/>
<rect x="847.1" y="370.0" width="1.6" height="1.6" fill="#f08c14"/>
<rect x="847.2" y="370.1" width="1.6" height="1.6" fill="#f7a020"/>
<rect x="853.9" y="371.9" width="1.6" height="1.6" fill="#f39018"/>
<rect x="854.1" y="370.1" width="1.6" height="1.6" fill="#ec8010"/>
<rect x="855.4" y="367.5" width="1.6" height="1.6" fill="#f5961e"/>
<rect x="856.8" y="367.5" width="1.6" height="1.6" fill="#f08c14"/>
<rect x="857.4" y="367.1" width="1.6" height="1.6" fill="#f7a020"/>
<rect x="859.4" y="368.8" width="1.6" height="1.6" fill="#f5961e"/>
<rect x="860.6" y="367.4" width="1.6" height="1.6" fill="#f7a020"/>
<rect x="861.4" y="368.4" width="1.6" height="1.6" fill="#f39018"/>
<rect x="864.5" y="369.3" width="1.6" height="1.6" fill="#f5961e"/>
<rect x="864.6" y="369.4" width="1.6" height="1.6" fill="#f08c14"/>
<rect x="866.5" y="369.3" width="1.6" height="1.6" fill="#f08c14"/>
<rect x="869.7" y="369.4" width="1.6" height="1.6" fill="#f5961e"/>
<rect x="871.1" y="370.7" width="1.6" height="1.6" fill="#f39018"/>
<rect x="872.8" y="369.1" width="1.6" height="1.6" fill="#ec8010"/>
<rect x="874.6" y="370.6" width="1.6" height="1.6" fill="#f7a020"/>
<rect x="876.7" y="370.6" width="1.6" height="1.6" fill="#f08c14"/>
<rect x="877.2" y="370.0" width="1.6" height="1.6" fill="#f7a020"/>
<rect x="878.2" y="369.3" width="1.6" height="1.6" fill="#ec8010"/>
<rect x="880.1" y="367.6" width="1.6" height="1.6" fill="#f39018"/>
<rect x="881.6" y="366.3" width="1.6" height="1.6" fill="#f7a020"/>
<rect x="882.8" y="365.0" width="1.6" height="1.6" fill="#f08c14"/>
<rect x="883.1" y="365.2" width="1.6" height="1.6" fill="#f7a020"/>
<rect x="884.5" y="364.1" width="1.6" height="1.6" fill="#f5961e"/>
<rect x="886.4" y="362.4" width="1.6" height="1.6" fill="#f39018"/>
<rect x="892.7" y="355.1" width="1.6" height="1.6" fill="#ec8010"/>
<rect x="894.4" y="356.4" width="1.6" height="1.6" fill="#f39018"/>
<rect x="894.3" y="360.7" width="1.6" height="1.6" fill="#f5961e"/>
<rect x="893.2" y="362.2" width="1.6" height="1.6" fill="#ec8010"/>
<rect x="893.3" y="366.0" width="1.6" height="1.6" fill="#f5961e"/>
<rect x="893.6" y="368.2" width="1.6" height="1.6" fill="#ec8010"/>
<rect x="893.7" y="370.7" width="1.6" height="1.6" fill="#f39018"/>
<rect x="894.6" y="373.6" width="1.6" height="1.6" fill="#f5961e"/>
<rect x="893.0" y="376.9" width="1.6" height="1.6" fill="#f5961e"/>
<rect x="894.2" y="383.8" width="1.6" height="1.6" fill="#ec8010"/>
<rect x="895.1" y="382.7" width="1.6" height="1.6" fill="#f08c14"/>
<rect x="896.8" y="384.3" width="1.6" height="1.6" fill="#f7a020"/>
<rect x="898.1" y="384.4" width="1.6" height="1.6" fill="#ec8010"/>
<rect x="898.2" y="383.7" width="1.6" height="1.6" fill="#f39018"/>
<rect x="899.9" y="384.4" width="1.6" height="1.6" fill="#f39018"/>
<rect x="901.3" y="386.0" width="1.6" height="1.6" fill="#f7a020"/>
<rect x="903.5" y="386.1" width="1.6" height="1.6" fill="#ec8010"/>
<rect x="904.3" y="384.4" width="1.6" height="1.6" fill="#ec8010"/>
<rect x="905.2" y="384.3" width="1.6" height="1.6" fill="#ec8010"/>
<rect x="907.2" y="384.5" width="1.6" height="1.6" fill="#f08c14"/>
<rect x="908.9" y="384.8" width="1.6" height="1.6" fill="#f5961e"/>
<rect x="909.8" y="385.0" width="1.6" height="1.6" fill="#ec8010"/>
<rect x="910.9" y="385.8" width="1.6" height="1.6" fill="#f39018"/>
<rect x="911.5" y="384.7" width="1.6" height="1.6" fill="#f08c14"/>
<rect x="912.3" y="385.8" width="1.6" height="1.6" fill="#f7a020"/>
<rect x="914.3" y="385.5" width="1.6" height="1.6" fill="#f08c14"/>
<rect x="916.3" y="384.4" width="1.6" height="1.6" fill="#f39018"/>
<rect x="916.3" y="384.7" width="1.6" height="1.6" fill="#f39018"/>
<rect x="916.9" y="384.3" width="1.6" height="1.6" fill="#ec8010"/>
<rect x="919.7" y="384.7" width="1.6" height="1.6" fill="#f5961e"/>
<rect x="921.8" y="384.7" width="1.6" height="1.6" fill="#f08c14"/>
<rect x="922.0" y="384.9" width="1.6" height="1.6" fill="#f7a020"/>
<rect x="923.0" y="384.7" width="1.6" height="1.6" fill="#f7a020"/>
<rect x="923.6" y="384.0" width="1.6" height="1.6" fill="#f5961e"/>
<rect x="926.5" y="384.1" width="1.6" height="1.6" fill="#f08c14"/>
<rect x="927.4" y="384.4" width="1.6" height="1.6" fill="#ec8010"/>
<rect x="928.4" y="384.1" width="1.6" height="1.6" fill="#f39018"/>
<rect x="929.1" y="384.9" width="1.6" height="1.6" fill="#ec8010"/>
<rect x="930.3" y="386.0" width="1.6" height="1.6" fill="#ec8010"/>
<rect x="930.8" y="384.8" width="1.6" height="1.6" fill="#f5961e"/>
<rect x="933.6" y="386.8" width="1.6" height="1.6" fill="#f7a020"/>
<rect x="934.1" y="387.2" width="1.6" height="1.6" fill="#f5961e"/>
<rect x="936.1" y="386.2" width="1.6" height="1.6" fill="#f7a020"/>
<rect x="937.4" y="386.6" width="1.6" height="1.6" fill="#f5961e"/>
<rect x="937.5" y="386.2" width="1.6" height="1.6" fill="#ec8010"/>
<rect x="939.7" y="385.5" width="1.6" height="1.6" fill="#ec8010"/>
<rect x="940.4" y="385.8" width="1.6" height="1.6" fill="#f5961e"/>
<rect x="942.8" y="386.3" width="1.6" height="1.6" fill="#f08c14"/>
<rect x="943.2" y="385.1" width="1.6" height="1.6" fill="#f7a020"/>
<rect x="945.1" y="385.3" width="1.6" height="1.6" fill="#ec8010"/>
<rect x="945.6" y="384.2" width="1.6" height="1.6" fill="#f5961e"/>
<rect x="947.3" y="384.3" width="1.6" height="1.6" fill="#ec8010"/>
<rect x="949.8" y="384.3" width="1.6" height="1.6" fill="#f5961e"/>
<rect x="949.5" y="385.6" width="1.6" height="1.6" fill="#ec8010"/>
<rect x="950.1" y="384.4" width="1.6" height="1.6" fill="#f08c14"/>
<rect x="953.2" y="384.5" width="1.6" height="1.6" fill="#f5961e"/>
<rect x="953.4" y="383.6" width="1.6" height="1.6" fill="#f7a020"/>
<rect x="955.3" y="383.3" width="1.6" height="1.6" fill="#f08c14"/>
<rect x="955.4" y="383.4" width="1.6" height="1.6" fill="#f39018"/>
<rect x="956.3" y="383.2" width="1.6" height="1.6" fill="#f08c14"/>
<rect x="958.1" y="384.2" width="1.6" height="1.6" fill="#ec8010"/>
<rect x="959.4" y="383.3" width="1.6" height="1.6" fill="#f08c14"/>
<rect x="962.2" y="382.3" width="1.6" height="1.6" fill="#f7a020"/>
<rect x="961.4" y="383.4" width="1.6" height="1.6" fill="#f39018"/>
<rect x="962.7" y="383.1" width="1.6" height="1.6" fill="#f08c14"/>
<rect x="964.4" y="383.5" width="1.6" height="1.6" fill="#f5961e"/>
<rect x="966.2" y="383.0" width="1.6" height="1.6" fill="#f08c14"/>
<rect x="966.9" y="381.9" width="1.6" height="1.6" fill="#f7a020"/>
<rect x="968.9" y="383.6" width="1.6" height="1.6" fill="#f5961e"/>
<rect x="970.0" y="382.5" width="1.6" height="1.6" fill="#f39018"/>
<rect x="970.6" y="383.4" width="1.6" height="1.6" fill="#f39018"/>
<rect x="972.4" y="383.4" width="1.6" height="1.6" fill="#f39018"/>
<rect x="973.7" y="383.1" width="1.6" height="1.6" fill="#ec8010"/>
<rect x="975.1" y="382.4" width="1.6" height="1.6" fill="#f7a020"/>
<rect x="975.4" y="383.3" width="1.6" height="1.6" fill="#f7a020"/>
<rect x="976.6" y="383.3" width="1.6" height="1.6" fill="#f7a020"/>
<rect x="972.2" y="392.2" width="1.8" height="1.8" fill="#f08c14"/>
<rect x="962.0" y="404.2" width="1.8" height="1.8" fill="#ec8010"/>
<rect x="836.1" y="262.1" width="1.8" height="1.8" fill="#ec8010"/>
<rect x="841.1" y="315.1" width="1.8" height="1.8" fill="#f08c14"/>
<rect x="843.1" y="339.1" width="1.8" height="1.8" fill="#f5961e"/>
<rect x="928.1" y="444.7" width="1.6" height="1.6" fill="#f5961e"/>
<rect x="929.0" y="446.5" width="1.6" height="1.6" fill="#f08c14"/>
<rect x="926.7" y="446.8" width="1.6" height="1.6" fill="#ec8010"/>
<rect x="927.2" y="448.3" width="1.6" height="1.6" fill="#f39018"/>
<rect x="926.0" y="449.1" width="1.6" height="1.6" fill="#f08c14"/>
<rect x="924.7" y="451.2" width="1.6" height="1.6" fill="#f08c14"/>
<rect x="925.9" y="451.1" width="1.6" height="1.6" fill="#ec8010"/>
<rect x="926.0" y="453.4" width="1.6" height="1.6" fill="#f5961e"/>
<rect x="926.7" y="455.2" width="1.6" height="1.6" fill="#f08c14"/>
<rect x="927.6" y="455.7" width="1.6" height="1.6" fill="#f39018"/>
<rect x="928.5" y="455.7" width="1.6" height="1.6" fill="#f08c14"/>
<rect x="929.5" y="455.8" width="1.6" height="1.6" fill="#f7a020"/>
<rect x="929.5" y="457.2" width="1.6" height="1.6" fill="#f08c14"/>
<rect x="931.4" y="457.4" width="1.6" height="1.6" fill="#f5961e"/>
<rect x="932.7" y="457.0" width="1.6" height="1.6" fill="#ec8010"/>
<rect x="934.5" y="456.9" width="1.6" height="1.6" fill="#ec8010"/>
<rect x="934.7" y="456.7" width="1.6" height="1.6" fill="#f7a020"/>
<rect x="936.2" y="455.5" width="1.6" height="1.6" fill="#f39018"/>
<rect x="937.7" y="455.8" width="1.6" height="1.6" fill="#f39018"/>
<rect x="933.8" y="438.5" width="1.8" height="1.8" fill="#ec8010"/>
<rect x="961.9" y="438.0" width="1.8" height="1.8" fill="#f08c14"/>
<rect x="953.7" y="444.0" width="1.8" height="1.8" fill="#ec8010"/>
<rect x="945.9" y="449.5" width="1.8" height="1.8" fill="#ec8010"/>
<line x1="979.9" y1="437.2" x2="983.2" y2="441.6" stroke="#7a20e0" stroke-width="1.6"/>
<line x1="983.2" y1="441.6" x2="985.4" y2="446.0" stroke="#3040f0" stroke-width="1.6"/>
<line x1="985.4" y1="446.0" x2="983.2" y2="448.2" stroke="#20c0e0" stroke-width="1.6"/>
<line x1="983.2" y1="448.2" x2="985.4" y2="450.4" stroke="#30e040" stroke-width="1.6"/>
<line x1="985.4" y1="450.4" x2="987.1" y2="452.6" stroke="#e0e020" stroke-width="1.6"/>
<rect x="985.1" y="452.9" width="1.6" height="1.6" fill="#f5961e"/>
<rect x="988.1" y="455.6" width="1.6" height="1.6" fill="#f5961e"/>
<rect x="988.7" y="456.7" width="1.6" height="1.6" fill="#f39018"/>
<rect x="991.3" y="457.0" width="1.6" height="1.6" fill="#f08c14"/>
<rect x="996.7" y="453.9" width="1.8" height="1.8" fill="#f5961e"/>
<rect x="1005.5" y="450.6" width="1.8" height="1.8" fill="#f5961e"/>
<rect x="1008.8" y="455.0" width="1.8" height="1.8" fill="#f39018"/>
<rect x="1000.0" y="460.0" width="1.8" height="1.8" fill="#f5961e"/>
<rect x="997.2" y="462.2" width="1.8" height="1.8" fill="#f08c14"/>
<rect x="994.2" y="464.7" width="1.6" height="1.6" fill="#f08c14"/>
<rect x="992.4" y="465.3" width="1.6" height="1.6" fill="#f7a020"/>
<rect x="990.4" y="466.0" width="1.6" height="1.6" fill="#f39018"/>
<rect x="990.6" y="466.1" width="1.6" height="1.6" fill="#f39018"/>
<rect x="988.7" y="468.0" width="1.6" height="1.6" fill="#f39018"/>
<rect x="987.9" y="467.7" width="1.6" height="1.6" fill="#f08c14"/>
<rect x="987.9" y="469.3" width="1.6" height="1.6" fill="#f7a020"/>
<rect x="986.1" y="471.7" width="1.6" height="1.6" fill="#f5961e"/>
<rect x="985.2" y="472.8" width="1.6" height="1.6" fill="#ec8010"/>
<rect x="986.1" y="473.8" width="1.6" height="1.6" fill="#f5961e"/>
<rect x="986.7" y="474.4" width="1.6" height="1.6" fill="#f7a020"/>
<rect x="988.5" y="474.7" width="1.6" height="1.6" fill="#f7a020"/>
<rect x="987.5" y="474.9" width="1.6" height="1.6" fill="#f39018"/>
<rect x="988.5" y="477.1" width="1.6" height="1.6" fill="#f7a020"/>
<rect x="991.0" y="477.9" width="1.6" height="1.6" fill="#f7a020"/>
<rect x="991.6" y="477.6" width="1.6" height="1.6" fill="#f7a020"/>
<rect x="991.8" y="479.0" width="1.6" height="1.6" fill="#f5961e"/>
<rect x="992.1" y="480.0" width="1.6" height="1.6" fill="#f5961e"/>
<rect x="993.6" y="480.1" width="1.6" height="1.6" fill="#f39018"/>
<rect x="994.2" y="482.0" width="1.6" height="1.6" fill="#f39018"/>
<rect x="995.4" y="483.4" width="1.6" height="1.6" fill="#f08c14"/>
<rect x="996.8" y="483.4" width="1.6" height="1.6" fill="#f08c14"/>
<rect x="995.4" y="484.5" width="1.6" height="1.6" fill="#f7a020"/>
<rect x="996.1" y="485.3" width="1.6" height="1.6" fill="#f39018"/>
<rect x="996.5" y="487.8" width="1.6" height="1.6" fill="#f39018"/>
<rect x="995.6" y="488.2" width="1.6" height="1.6" fill="#f5961e"/>
<rect x="989.0" y="490.9" width="1.8" height="1.8" fill="#f5961e"/>
<rect x="985.6" y="492.5" width="1.8" height="1.8" fill="#f5961e"/>
<rect x="980.1" y="494.7" width="1.8" height="1.8" fill="#f39018"/>
<rect x="977.9" y="495.8" width="1.8" height="1.8" fill="#f5961e"/>
<rect x="970.2" y="498.6" width="1.8" height="1.8" fill="#ec8010"/>
<rect x="961.4" y="500.8" width="1.8" height="1.8" fill="#f08c14"/>
<rect x="947.1" y="504.7" width="1.8" height="1.8" fill="#f08c14"/>
<rect x="941.5" y="506.9" width="1.8" height="1.8" fill="#f08c14"/>
<rect x="938.2" y="508.0" width="1.8" height="1.8" fill="#f5961e"/>
<rect x="931.6" y="510.2" width="1.8" height="1.8" fill="#f5961e"/>
<rect x="925.0" y="520.1" width="1.8" height="1.8" fill="#f5961e"/>
<rect x="932.2" y="519.6" width="1.8" height="1.8" fill="#f39018"/>
<rect x="949.3" y="516.8" width="1.8" height="1.8" fill="#f39018"/>
<rect x="925.4" y="513.4" width="1.6" height="1.6" fill="#f39018"/>
<rect x="928.6" y="513.9" width="1.6" height="1.6" fill="#f39018"/>
<rect x="930.2" y="513.2" width="1.6" height="1.6" fill="#f5961e"/>
<rect x="934.8" y="513.5" width="1.6" height="1.6" fill="#f39018"/>
<rect x="936.4" y="514.1" width="1.6" height="1.6" fill="#ec8010"/>
<rect x="938.7" y="512.9" width="1.6" height="1.6" fill="#f5961e"/>
<rect x="941.6" y="512.7" width="1.6" height="1.6" fill="#f7a020"/>
<rect x="944.1" y="513.4" width="1.6" height="1.6" fill="#ec8010"/>
<rect x="948.0" y="514.2" width="1.6" height="1.6" fill="#f7a020"/>
<rect x="950.7" y="512.5" width="1.6" height="1.6" fill="#f39018"/>
<rect x="951.1" y="512.5" width="1.6" height="1.6" fill="#f08c14"/>
<rect x="956.1" y="512.5" width="1.6" height="1.6" fill="#ec8010"/>
<rect x="957.0" y="513.6" width="1.6" height="1.6" fill="#f39018"/>
<rect x="961.2" y="513.0" width="1.6" height="1.6" fill="#f5961e"/>
<rect x="963.6" y="512.6" width="1.6" height="1.6" fill="#f7a020"/>
<rect x="966.2" y="512.7" width="1.6" height="1.6" fill="#f39018"/>
<rect x="968.6" y="511.5" width="1.6" height="1.6" fill="#f5961e"/>
<rect x="971.0" y="513.4" width="1.6" height="1.6" fill="#f5961e"/>
<rect x="972.9" y="512.8" width="1.6" height="1.6" fill="#f5961e"/>
<rect x="977.8" y="511.6" width="1.6" height="1.6" fill="#f39018"/>
<rect x="892.0" y="527.5" width="1.6" height="1.6" fill="#f07010"/>
<rect x="894.8" y="526.4" width="1.6" height="1.6" fill="#f5961e"/>
<rect x="894.6" y="524.9" width="1.6" height="1.6" fill="#f07010"/>
<rect x="898.2" y="525.4" width="1.6" height="1.6" fill="#f07010"/>
<rect x="899.1" y="524.0" width="1.6" height="1.6" fill="#f07010"/>
<rect x="900.4" y="524.3" width="1.6" height="1.6" fill="#f5961e"/>
<rect x="901.6" y="522.8" width="1.6" height="1.6" fill="#f5961e"/>
<rect x="903.1" y="524.0" width="1.6" height="1.6" fill="#f5961e"/>
<rect x="905.7" y="523.2" width="1.6" height="1.6" fill="#f5961e"/>
<rect x="906.2" y="522.8" width="1.6" height="1.6" fill="#f5961e"/>
<rect x="908.0" y="522.7" width="1.6" height="1.6" fill="#f07010"/>
<rect x="909.9" y="523.3" width="1.6" height="1.6" fill="#f07010"/>
<rect x="911.8" y="522.2" width="1.6" height="1.6" fill="#f07010"/>
<rect x="914.2" y="521.2" width="1.6" height="1.6" fill="#f5961e"/>
<rect x="614.6" y="459.4" width="1.6" height="1.6" fill="#f08c14"/>
<rect x="615.0" y="461.2" width="1.6" height="1.6" fill="#f39018"/>
<rect x="615.8" y="460.7" width="1.6" height="1.6" fill="#f08c14"/>
<rect x="614.6" y="462.2" width="1.6" height="1.6" fill="#f5961e"/>
<rect x="616.3" y="463.9" width="1.6" height="1.6" fill="#f5961e"/>
<rect x="615.1" y="465.0" width="1.6" height="1.6" fill="#ec8010"/>
<rect x="616.1" y="466.4" width="1.6" height="1.6" fill="#f5961e"/>
<rect x="615.3" y="467.4" width="1.6" height="1.6" fill="#f39018"/>
<rect x="615.6" y="469.8" width="1.6" height="1.6" fill="#f08c14"/>
<rect x="615.3" y="470.9" width="1.6" height="1.6" fill="#f39018"/>
<rect x="615.9" y="471.5" width="1.6" height="1.6" fill="#f08c14"/>
<rect x="616.2" y="473.5" width="1.6" height="1.6" fill="#f7a020"/>
<rect x="616.3" y="474.8" width="1.6" height="1.6" fill="#f39018"/>
<rect x="616.2" y="476.0" width="1.6" height="1.6" fill="#f08c14"/>
<rect x="616.2" y="477.8" width="1.6" height="1.6" fill="#f39018"/>
<rect x="616.1" y="477.9" width="1.6" height="1.6" fill="#f7a020"/>
<rect x="616.7" y="479.5" width="1.6" height="1.6" fill="#f08c14"/>
<rect x="618.0" y="482.1" width="1.6" height="1.6" fill="#f08c14"/>
<rect x="616.5" y="482.7" width="1.6" height="1.6" fill="#f08c14"/>
<rect x="617.9" y="484.0" width="1.6" height="1.6" fill="#f08c14"/>
<rect x="618.4" y="484.6" width="1.6" height="1.6" fill="#ec8010"/>
<rect x="616.7" y="487.3" width="1.6" height="1.6" fill="#ec8010"/>
<rect x="617.9" y="488.3" width="1.6" height="1.6" fill="#ec8010"/>
<rect x="617.5" y="489.4" width="1.6" height="1.6" fill="#f5961e"/>
<rect x="619.0" y="490.6" width="1.6" height="1.6" fill="#f39018"/>
<rect x="618.6" y="492.6" width="1.6" height="1.6" fill="#f39018"/>
<rect x="618.8" y="493.7" width="1.6" height="1.6" fill="#ec8010"/>
<rect x="618.1" y="494.9" width="1.6" height="1.6" fill="#ec8010"/>
<rect x="618.5" y="496.1" width="1.6" height="1.6" fill="#f08c14"/>
<rect x="618.7" y="496.9" width="1.6" height="1.6" fill="#f39018"/>
<rect x="619.0" y="499.0" width="1.6" height="1.6" fill="#f08c14"/>
<rect x="618.4" y="499.0" width="1.6" height="1.6" fill="#ec8010"/>
<rect x="617.8" y="500.7" width="1.6" height="1.6" fill="#f08c14"/>
<rect x="619.1" y="502.9" width="1.6" height="1.6" fill="#f39018"/>
<rect x="619.0" y="503.3" width="1.6" height="1.6" fill="#f08c14"/>
<rect x="618.2" y="505.2" width="1.6" height="1.6" fill="#f7a020"/>
<rect x="617.8" y="506.9" width="1.6" height="1.6" fill="#f08c14"/>
<line x1="612.1" y1="439.4" x2="613.2" y2="443.8" stroke="#7a20e0" stroke-width="1.6"/>
<line x1="613.2" y1="443.8" x2="617.6" y2="448.2" stroke="#3040f0" stroke-width="1.6"/>
<line x1="617.6" y1="448.2" x2="616.5" y2="454.8" stroke="#20c0e0" stroke-width="1.6"/>
<line x1="616.5" y1="454.8" x2="619.8" y2="459.3" stroke="#30e040" stroke-width="1.6"/>
<line x1="617.6" y1="507.8" x2="619.8" y2="512.2" stroke="#7a20e0" stroke-width="1.6"/>
<line x1="619.8" y1="512.2" x2="620.9" y2="518.8" stroke="#3040f0" stroke-width="1.6"/>
<line x1="620.9" y1="518.8" x2="624.0" y2="522.1" stroke="#20c0e0" stroke-width="1.6"/>
<rect x="619.5" y="527.5" width="1.6" height="1.6" fill="#f5961e"/>
<rect x="620.5" y="528.8" width="1.6" height="1.6" fill="#f7a020"/>
<rect x="620.1" y="528.6" width="1.6" height="1.6" fill="#ec8010"/>
<rect x="620.7" y="531.6" width="1.6" height="1.6" fill="#f39018"/>
<rect x="619.9" y="532.6" width="1.6" height="1.6" fill="#f39018"/>
<rect x="621.6" y="534.7" width="1.6" height="1.6" fill="#ec8010"/>
<rect x="619.9" y="535.1" width="1.6" height="1.6" fill="#f08c14"/>
<rect x="620.9" y="535.5" width="1.6" height="1.6" fill="#f08c14"/>
<rect x="621.1" y="537.9" width="1.6" height="1.6" fill="#ec8010"/>
<rect x="620.5" y="538.7" width="1.6" height="1.6" fill="#f08c14"/>
<rect x="620.9" y="540.6" width="1.6" height="1.6" fill="#f08c14"/>
<rect x="620.8" y="540.5" width="1.6" height="1.6" fill="#ec8010"/>
<rect x="621.1" y="543.1" width="1.6" height="1.6" fill="#f7a020"/>
<rect x="583.7" y="541.2" width="1.6" height="1.6" fill="#e05a10"/>
<rect x="608.6" y="550.0" width="1.6" height="1.6" fill="#e05a10"/>
<rect x="612.4" y="537.8" width="1.6" height="1.6" fill="#e05a10"/>
<rect x="619.0" y="542.3" width="1.6" height="1.6" fill="#e05a10"/>
<rect x="488.9" y="547.1" width="1.6" height="1.6" fill="#f0f020"/>
<rect x="623.9" y="549.2" width="1.6" height="1.6" fill="#f7a020"/>
<rect x="624.8" y="550.1" width="1.6" height="1.6" fill="#f5961e"/>
<rect x="628.6" y="551.3" width="1.6" height="1.6" fill="#f08c14"/>
<rect x="629.1" y="551.2" width="1.6" height="1.6" fill="#f5961e"/>
<rect x="630.1" y="550.9" width="1.6" height="1.6" fill="#f39018"/>
<rect x="632.0" y="551.0" width="1.6" height="1.6" fill="#ec8010"/>
<rect x="634.2" y="552.7" width="1.6" height="1.6" fill="#f39018"/>
<rect x="637.4" y="552.4" width="1.6" height="1.6" fill="#f5961e"/>
<rect x="639.8" y="553.1" width="1.6" height="1.6" fill="#f7a020"/>
<rect x="640.9" y="552.8" width="1.6" height="1.6" fill="#ec8010"/>
<rect x="642.1" y="552.3" width="1.6" height="1.6" fill="#ec8010"/>
<rect x="643.7" y="553.3" width="1.6" height="1.6" fill="#f5961e"/>
<rect x="647.4" y="554.0" width="1.6" height="1.6" fill="#f08c14"/>
<rect x="648.6" y="554.6" width="1.6" height="1.6" fill="#f5961e"/>
<rect x="649.7" y="554.5" width="1.6" height="1.6" fill="#ec8010"/>
<rect x="653.2" y="554.3" width="1.6" height="1.6" fill="#ec8010"/>
<rect x="655.1" y="554.3" width="1.6" height="1.6" fill="#f7a020"/>
<rect x="655.3" y="555.5" width="1.6" height="1.6" fill="#f7a020"/>
<rect x="657.5" y="555.7" width="1.6" height="1.6" fill="#f08c14"/>
<rect x="659.9" y="556.2" width="1.6" height="1.6" fill="#f7a020"/>
<rect x="661.7" y="556.1" width="1.6" height="1.6" fill="#f39018"/>
<rect x="664.6" y="556.4" width="1.6" height="1.6" fill="#f7a020"/>
<rect x="665.6" y="557.9" width="1.6" height="1.6" fill="#f7a020"/>
<rect x="667.3" y="557.3" width="1.6" height="1.6" fill="#f7a020"/>
<rect x="669.4" y="557.5" width="1.6" height="1.6" fill="#ec8010"/>
<rect x="671.2" y="558.1" width="1.6" height="1.6" fill="#f7a020"/>
<rect x="673.7" y="557.9" width="1.6" height="1.6" fill="#f5961e"/>
<rect x="675.0" y="559.0" width="1.6" height="1.6" fill="#f39018"/>
<rect x="676.1" y="558.5" width="1.6" height="1.6" fill="#f08c14"/>
<rect x="679.2" y="560.5" width="1.6" height="1.6" fill="#f5961e"/>
<rect x="682.2" y="560.4" width="1.6" height="1.6" fill="#f39018"/>
<rect x="683.3" y="560.7" width="1.6" height="1.6" fill="#f5961e"/>
<rect x="685.5" y="560.5" width="1.6" height="1.6" fill="#f08c14"/>
<rect x="686.6" y="559.9" width="1.6" height="1.6" fill="#f5961e"/>
<rect x="690.6" y="560.8" width="1.6" height="1.6" fill="#f08c14"/>
<rect x="692.2" y="560.8" width="1.6" height="1.6" fill="#f7a020"/>
<rect x="692.5" y="560.5" width="1.6" height="1.6" fill="#f39018"/>
<rect x="696.6" y="560.8" width="1.6" height="1.6" fill="#f39018"/>
<rect x="698.2" y="562.4" width="1.6" height="1.6" fill="#ec8010"/>
<rect x="700.4" y="562.0" width="1.6" height="1.6" fill="#f5961e"/>
<rect x="701.8" y="563.3" width="1.6" height="1.6" fill="#f08c14"/>
<rect x="703.1" y="561.7" width="1.6" height="1.6" fill="#ec8010"/>
<rect x="704.3" y="561.7" width="1.6" height="1.6" fill="#f5961e"/>
<rect x="707.1" y="563.8" width="1.6" height="1.6" fill="#f5961e"/>
<rect x="708.1" y="563.0" width="1.6" height="1.6" fill="#f7a020"/>
<rect x="710.8" y="563.8" width="1.6" height="1.6" fill="#f08c14"/>
<rect x="713.1" y="564.1" width="1.6" height="1.6" fill="#f08c14"/>
<rect x="714.3" y="564.0" width="1.6" height="1.6" fill="#ec8010"/>
<rect x="717.7" y="563.5" width="1.6" height="1.6" fill="#f5961e"/>
<rect x="718.0" y="563.2" width="1.6" height="1.6" fill="#f39018"/>
<rect x="719.9" y="564.8" width="1.6" height="1.6" fill="#f08c14"/>
<rect x="723.7" y="564.9" width="1.6" height="1.6" fill="#f7a020"/>
<rect x="724.5" y="564.7" width="1.6" height="1.6" fill="#f08c14"/>
<rect x="726.6" y="564.8" width="1.6" height="1.6" fill="#f08c14"/>
<rect x="728.2" y="565.1" width="1.6" height="1.6" fill="#ec8010"/>
<rect x="731.1" y="565.7" width="1.6" height="1.6" fill="#f7a020"/>
<rect x="732.1" y="566.1" width="1.6" height="1.6" fill="#f39018"/>
<rect x="734.0" y="567.0" width="1.6" height="1.6" fill="#f08c14"/>
<rect x="735.5" y="566.1" width="1.6" height="1.6" fill="#f08c14"/>
<rect x="738.0" y="566.7" width="1.6" height="1.6" fill="#f08c14"/>
<rect x="739.5" y="565.8" width="1.6" height="1.6" fill="#f7a020"/>
<rect x="740.6" y="567.8" width="1.6" height="1.6" fill="#f5961e"/>
<rect x="742.5" y="568.0" width="1.6" height="1.6" fill="#f39018"/>
<rect x="745.9" y="568.0" width="1.6" height="1.6" fill="#f39018"/>
<rect x="748.2" y="567.3" width="1.6" height="1.6" fill="#f5961e"/>
<rect x="749.1" y="567.3" width="1.6" height="1.6" fill="#f08c14"/>
<rect x="750.0" y="567.3" width="1.6" height="1.6" fill="#f08c14"/>
<rect x="753.5" y="566.4" width="1.6" height="1.6" fill="#ec8010"/>
<rect x="754.0" y="567.9" width="1.6" height="1.6" fill="#f5961e"/>
<rect x="756.7" y="568.1" width="1.6" height="1.6" fill="#f39018"/>
<rect x="758.6" y="566.6" width="1.6" height="1.6" fill="#f08c14"/>
<rect x="759.7" y="567.5" width="1.6" height="1.6" fill="#f7a020"/>
<rect x="762.4" y="567.6" width="1.6" height="1.6" fill="#f08c14"/>
<rect x="765.1" y="567.0" width="1.6" height="1.6" fill="#f5961e"/>
<rect x="766.3" y="566.1" width="1.6" height="1.6" fill="#f7a020"/>
<rect x="768.2" y="566.9" width="1.6" height="1.6" fill="#f5961e"/>
<rect x="769.3" y="567.5" width="1.6" height="1.6" fill="#f39018"/>
<rect x="772.4" y="566.2" width="1.6" height="1.6" fill="#f7a020"/>
<rect x="775.0" y="567.2" width="1.6" height="1.6" fill="#f39018"/>
<rect x="776.1" y="565.6" width="1.6" height="1.6" fill="#f08c14"/>
<rect x="812.7" y="547.5" width="1.6" height="1.6" fill="#f07010"/>
<rect x="813.9" y="548.0" width="1.6" height="1.6" fill="#f07010"/>
<rect x="814.5" y="548.4" width="1.6" height="1.6" fill="#e86a10"/>
<rect x="814.7" y="547.7" width="1.6" height="1.6" fill="#e86a10"/>
<rect x="816.0" y="547.5" width="1.6" height="1.6" fill="#f07010"/>
<rect x="815.8" y="547.9" width="1.6" height="1.6" fill="#e86a10"/>
<rect x="816.3" y="546.7" width="1.6" height="1.6" fill="#f58018"/>
<rect x="817.7" y="546.2" width="1.6" height="1.6" fill="#f07010"/>
<rect x="818.4" y="546.9" width="1.6" height="1.6" fill="#f58018"/>
<rect x="818.6" y="546.8" width="1.6" height="1.6" fill="#f07010"/>
<rect x="819.7" y="546.3" width="1.6" height="1.6" fill="#e86a10"/>
<rect x="820.3" y="545.7" width="1.6" height="1.6" fill="#f07010"/>
<rect x="821.2" y="545.7" width="1.6" height="1.6" fill="#f07010"/>
<rect x="822.8" y="545.5" width="1.6" height="1.6" fill="#f07010"/>
<rect x="822.5" y="545.8" width="1.6" height="1.6" fill="#f07010"/>
<rect x="824.2" y="545.6" width="1.6" height="1.6" fill="#f07010"/>
<rect x="825.0" y="545.5" width="1.6" height="1.6" fill="#f58018"/>
<rect x="825.3" y="544.6" width="1.6" height="1.6" fill="#f58018"/>
<rect x="825.3" y="544.0" width="1.6" height="1.6" fill="#f58018"/>
<rect x="826.0" y="543.7" width="1.6" height="1.6" fill="#e86a10"/>
<rect x="827.7" y="544.0" width="1.6" height="1.6" fill="#f07010"/>
<rect x="827.7" y="543.4" width="1.6" height="1.6" fill="#f58018"/>
<rect x="828.4" y="544.1" width="1.6" height="1.6" fill="#f58018"/>
<rect x="829.1" y="544.0" width="1.6" height="1.6" fill="#f07010"/>
<rect x="830.0" y="543.5" width="1.6" height="1.6" fill="#e86a10"/>
<rect x="831.1" y="543.5" width="1.6" height="1.6" fill="#f07010"/>
<rect x="831.0" y="542.7" width="1.6" height="1.6" fill="#f58018"/>
<rect x="832.5" y="542.5" width="1.6" height="1.6" fill="#f58018"/>
<rect x="831.1" y="543.9" width="1.6" height="1.6" fill="#f58018"/>
<rect x="831.4" y="543.9" width="1.6" height="1.6" fill="#e86a10"/>
<rect x="830.3" y="544.0" width="1.6" height="1.6" fill="#e86a10"/>
<rect x="830.2" y="544.7" width="1.6" height="1.6" fill="#f58018"/>
<rect x="830.1" y="545.5" width="1.6" height="1.6" fill="#f07010"/>
<rect x="829.2" y="546.3" width="1.6" height="1.6" fill="#e86a10"/>
<rect x="828.6" y="547.4" width="1.6" height="1.6" fill="#f58018"/>
<rect x="828.2" y="547.6" width="1.6" height="1.6" fill="#e86a10"/>
<rect x="828.7" y="548.8" width="1.6" height="1.6" fill="#f07010"/>
<rect x="828.3" y="549.1" width="1.6" height="1.6" fill="#e86a10"/>
<rect x="827.4" y="549.8" width="1.6" height="1.6" fill="#f58018"/>
<rect x="827.5" y="550.7" width="1.6" height="1.6" fill="#f07010"/>
<rect x="827.1" y="550.7" width="1.6" height="1.6" fill="#e86a10"/>
<rect x="825.9" y="552.2" width="1.6" height="1.6" fill="#f58018"/>
<rect x="826.3" y="552.4" width="1.6" height="1.6" fill="#f07010"/>
<rect x="826.1" y="553.7" width="1.6" height="1.6" fill="#f07010"/>
<rect x="825.4" y="554.1" width="1.6" height="1.6" fill="#f58018"/>
<rect x="825.1" y="554.6" width="1.6" height="1.6" fill="#f07010"/>
<rect x="823.7" y="555.3" width="1.6" height="1.6" fill="#f58018"/>
<rect x="823.9" y="555.8" width="1.6" height="1.6" fill="#f07010"/>
<rect x="822.9" y="556.4" width="1.6" height="1.6" fill="#f07010"/>
<rect x="822.7" y="557.3" width="1.6" height="1.6" fill="#f07010"/>
<rect x="823.3" y="557.8" width="1.6" height="1.6" fill="#f58018"/>
<rect x="822.4" y="558.2" width="1.6" height="1.6" fill="#e86a10"/>
<rect x="823.1" y="558.1" width="1.6" height="1.6" fill="#f07010"/>
<rect x="823.4" y="558.1" width="1.6" height="1.6" fill="#f58018"/>
<rect x="825.1" y="558.3" width="1.6" height="1.6" fill="#f07010"/>
<rect x="825.0" y="559.1" width="1.6" height="1.6" fill="#f07010"/>
<rect x="826.2" y="559.5" width="1.6" height="1.6" fill="#f07010"/>
<rect x="826.5" y="559.7" width="1.6" height="1.6" fill="#e86a10"/>
<rect x="828.2" y="559.7" width="1.6" height="1.6" fill="#f58018"/>
<rect x="828.1" y="559.7" width="1.6" height="1.6" fill="#f58018"/>
<rect x="828.9" y="560.0" width="1.6" height="1.6" fill="#e86a10"/>
<rect x="830.7" y="560.8" width="1.6" height="1.6" fill="#e86a10"/>
<rect x="830.6" y="561.1" width="1.6" height="1.6" fill="#f58018"/>
<rect x="831.3" y="560.9" width="1.6" height="1.6" fill="#f58018"/>
<rect x="831.7" y="560.6" width="1.6" height="1.6" fill="#f07010"/>
<rect x="832.3" y="560.0" width="1.6" height="1.6" fill="#f58018"/>
<rect x="834.4" y="560.4" width="1.6" height="1.6" fill="#f07010"/>
<rect x="834.4" y="559.7" width="1.6" height="1.6" fill="#e86a10"/>
<rect x="835.3" y="560.0" width="1.6" height="1.6" fill="#f07010"/>
<rect x="835.5" y="559.3" width="1.6" height="1.6" fill="#f58018"/>
<rect x="835.8" y="558.5" width="1.6" height="1.6" fill="#f58018"/>
<rect x="836.7" y="558.8" width="1.6" height="1.6" fill="#e86a10"/>
<rect x="837.5" y="558.5" width="1.6" height="1.6" fill="#f07010"/>
<rect x="838.6" y="558.7" width="1.6" height="1.6" fill="#f58018"/>
<rect x="839.0" y="558.1" width="1.6" height="1.6" fill="#e86a10"/>
<rect x="840.5" y="557.7" width="1.6" height="1.6" fill="#e86a10"/>
<rect x="840.5" y="557.3" width="1.6" height="1.6" fill="#f58018"/>
<rect x="841.5" y="557.1" width="1.6" height="1.6" fill="#f58018"/>
<rect x="841.6" y="556.3" width="1.6" height="1.6" fill="#f07010"/>
<rect x="842.7" y="556.4" width="1.6" height="1.6" fill="#f07010"/>
<rect x="843.2" y="556.6" width="1.6" height="1.6" fill="#f58018"/>
<rect x="844.2" y="555.4" width="1.6" height="1.6" fill="#f07010"/>
<rect x="845.2" y="555.0" width="1.6" height="1.6" fill="#f07010"/>
<rect x="845.5" y="555.3" width="1.6" height="1.6" fill="#e86a10"/>
<rect x="846.2" y="555.2" width="1.6" height="1.6" fill="#f07010"/>
<rect x="847.7" y="554.8" width="1.6" height="1.6" fill="#f07010"/>
<rect x="848.0" y="553.7" width="1.6" height="1.6" fill="#f07010"/>
<rect x="849.0" y="554.4" width="1.6" height="1.6" fill="#e86a10"/>
<rect x="849.5" y="554.3" width="1.6" height="1.6" fill="#f58018"/>
<rect x="850.0" y="553.5" width="1.6" height="1.6" fill="#e86a10"/>
<rect x="851.0" y="552.4" width="1.6" height="1.6" fill="#e86a10"/>
<rect x="851.3" y="553.4" width="1.6" height="1.6" fill="#e86a10"/>
<rect x="852.3" y="552.1" width="1.6" height="1.6" fill="#e86a10"/>
<rect x="852.2" y="551.6" width="1.6" height="1.6" fill="#f58018"/>
<rect x="852.5" y="550.9" width="1.6" height="1.6" fill="#e86a10"/>
<rect x="853.1" y="550.1" width="1.6" height="1.6" fill="#e86a10"/>
<rect x="853.7" y="549.6" width="1.6" height="1.6" fill="#f07010"/>
<rect x="854.5" y="549.0" width="1.6" height="1.6" fill="#f58018"/>
<rect x="853.9" y="549.0" width="1.6" height="1.6" fill="#f58018"/>
<rect x="855.2" y="547.3" width="1.6" height="1.6" fill="#f58018"/>
<rect x="855.2" y="547.8" width="1.6" height="1.6" fill="#f07010"/>
<rect x="855.3" y="547.2" width="1.6" height="1.6" fill="#f58018"/>
<rect x="856.7" y="545.8" width="1.6" height="1.6" fill="#f58018"/>
<rect x="856.7" y="545.5" width="1.6" height="1.6" fill="#f58018"/>
<rect x="856.4" y="544.8" width="1.6" height="1.6" fill="#f58018"/>
<rect x="858.0" y="544.1" width="1.6" height="1.6" fill="#f07010"/>
<rect x="858.3" y="544.2" width="1.6" height="1.6" fill="#e86a10"/>
<rect x="858.6" y="543.8" width="1.6" height="1.6" fill="#f58018"/>
<rect x="860.1" y="544.5" width="1.6" height="1.6" fill="#f58018"/>
<rect x="861.1" y="543.2" width="1.6" height="1.6" fill="#f58018"/>
<rect x="862.1" y="544.2" width="1.6" height="1.6" fill="#e86a10"/>
<rect x="862.4" y="543.3" width="1.6" height="1.6" fill="#f58018"/>
<rect x="863.8" y="544.1" width="1.6" height="1.6" fill="#f58018"/>
<rect x="863.9" y="543.9" width="1.6" height="1.6" fill="#f07010"/>
<rect x="864.2" y="542.9" width="1.6" height="1.6" fill="#e86a10"/>
<rect x="864.8" y="543.4" width="1.6" height="1.6" fill="#e86a10"/>
<rect x="865.6" y="543.1" width="1.6" height="1.6" fill="#f07010"/>
<rect x="867.1" y="542.5" width="1.6" height="1.6" fill="#f58018"/>
<rect x="867.1" y="542.4" width="1.6" height="1.6" fill="#f07010"/>
<rect x="868.4" y="543.1" width="1.6" height="1.6" fill="#f58018"/>
<rect x="870.0" y="542.9" width="1.6" height="1.6" fill="#f07010"/>
<rect x="869.9" y="542.3" width="1.6" height="1.6" fill="#f07010"/>
<rect x="870.8" y="542.1" width="1.6" height="1.6" fill="#f07010"/>
<rect x="881.3" y="530.5" width="1.5" height="1.5" fill="#f58018"/>
<rect x="881.9" y="529.0" width="1.5" height="1.5" fill="#f58018"/>
<rect x="882.7" y="529.1" width="1.5" height="1.5" fill="#f07010"/>
<rect x="883.4" y="529.4" width="1.5" height="1.5" fill="#f07010"/>
<rect x="884.7" y="528.4" width="1.5" height="1.5" fill="#f07010"/>
<rect x="885.4" y="528.5" width="1.5" height="1.5" fill="#f07010"/>
<rect x="886.6" y="527.5" width="1.5" height="1.5" fill="#f07010"/>
<rect x="887.3" y="527.1" width="1.5" height="1.5" fill="#f07010"/>
<rect x="888.7" y="526.7" width="1.5" height="1.5" fill="#f58018"/>
<rect x="889.2" y="527.1" width="1.5" height="1.5" fill="#f07010"/>
<rect x="890.1" y="526.3" width="1.5" height="1.5" fill="#f58018"/>
<rect x="891.1" y="525.9" width="1.5" height="1.5" fill="#f07010"/>
<rect x="891.0" y="525.4" width="1.5" height="1.5" fill="#f07010"/>
<rect x="892.3" y="525.1" width="1.5" height="1.5" fill="#f07010"/>
<rect x="893.6" y="524.6" width="1.5" height="1.5" fill="#f07010"/>
<rect x="894.2" y="524.9" width="1.5" height="1.5" fill="#f07010"/>
<rect x="894.9" y="524.2" width="1.5" height="1.5" fill="#f58018"/>
<rect x="895.8" y="524.1" width="1.5" height="1.5" fill="#f07010"/>
<rect x="896.2" y="523.8" width="1.5" height="1.5" fill="#f07010"/>
<rect x="897.6" y="524.4" width="1.5" height="1.5" fill="#f07010"/>
<rect x="898.1" y="524.3" width="1.5" height="1.5" fill="#f58018"/>
<rect x="899.5" y="523.7" width="1.5" height="1.5" fill="#f58018"/>
<rect x="899.9" y="523.8" width="1.5" height="1.5" fill="#f07010"/>
<rect x="901.9" y="523.8" width="1.5" height="1.5" fill="#f58018"/>
<rect x="901.9" y="523.3" width="1.5" height="1.5" fill="#f07010"/>
<rect x="903.0" y="523.8" width="1.5" height="1.5" fill="#f07010"/>
<rect x="903.5" y="523.8" width="1.5" height="1.5" fill="#f58018"/>
<rect x="904.7" y="523.0" width="1.5" height="1.5" fill="#f07010"/>
<rect x="905.0" y="522.9" width="1.5" height="1.5" fill="#f07010"/>
<rect x="906.5" y="522.7" width="1.5" height="1.5" fill="#f58018"/>
<rect x="907.7" y="522.7" width="1.5" height="1.5" fill="#f58018"/>
<rect x="882.3" y="534.8" width="1.6" height="1.6" fill="#f06018"/>
<rect x="883.2" y="535.9" width="1.6" height="1.6" fill="#e05010"/>
<rect x="885.0" y="535.7" width="1.6" height="1.6" fill="#f06018"/>
<rect x="884.5" y="537.4" width="1.6" height="1.6" fill="#e05010"/>
<rect x="885.4" y="538.1" width="1.6" height="1.6" fill="#e05010"/>
<rect x="887.2" y="538.6" width="1.6" height="1.6" fill="#e05010"/>
<rect x="886.5" y="539.1" width="1.6" height="1.6" fill="#e05010"/>
<rect x="888.1" y="539.8" width="1.6" height="1.6" fill="#f07010"/>
<rect x="888.2" y="541.9" width="1.6" height="1.6" fill="#f07010"/>
<rect x="888.0" y="541.9" width="1.6" height="1.6" fill="#e05010"/>
<rect x="889.7" y="542.8" width="1.6" height="1.6" fill="#f06018"/>
<rect x="889.6" y="543.9" width="1.6" height="1.6" fill="#e05010"/>
<rect x="891.4" y="544.1" width="1.6" height="1.6" fill="#e05010"/>
<rect x="890.3" y="546.2" width="1.6" height="1.6" fill="#e05010"/>
<rect x="892.6" y="546.9" width="1.6" height="1.6" fill="#f07010"/>
<rect x="891.8" y="548.2" width="1.6" height="1.6" fill="#e05010"/>
<rect x="892.8" y="548.8" width="1.6" height="1.6" fill="#e05010"/>
<rect x="892.9" y="549.2" width="1.6" height="1.6" fill="#f06018"/>
<rect x="894.1" y="550.8" width="1.6" height="1.6" fill="#e05010"/>
<rect x="895.2" y="551.2" width="1.6" height="1.6" fill="#e05010"/>
<rect x="894.9" y="551.6" width="1.6" height="1.6" fill="#f06018"/>
<rect x="897.2" y="552.5" width="1.6" height="1.6" fill="#f06018"/>
<rect x="896.7" y="553.1" width="1.6" height="1.6" fill="#e05010"/>
<rect x="898.2" y="554.1" width="1.6" height="1.6" fill="#e05010"/>
<rect x="898.5" y="554.8" width="1.6" height="1.6" fill="#f07010"/>
<rect x="899.7" y="554.2" width="1.6" height="1.6" fill="#f06018"/>
<rect x="900.9" y="555.3" width="1.6" height="1.6" fill="#f06018"/>
<rect x="901.0" y="556.1" width="1.6" height="1.6" fill="#f06018"/>
<rect x="902.5" y="557.1" width="1.6" height="1.6" fill="#f07010"/>
<rect x="903.0" y="557.4" width="1.6" height="1.6" fill="#f06018"/>
<rect x="903.8" y="557.5" width="1.6" height="1.6" fill="#f07010"/>
<rect x="904.9" y="558.9" width="1.6" height="1.6" fill="#f06018"/>
<rect x="905.9" y="558.1" width="1.6" height="1.6" fill="#f06018"/>
<rect x="906.6" y="559.5" width="1.6" height="1.6" fill="#f06018"/>
<rect x="908.7" y="559.0" width="1.6" height="1.6" fill="#f07010"/>
<rect x="759.2" y="570.8" width="1.6" height="1.6" fill="#f5961e"/>
<rect x="760.0" y="569.3" width="1.6" height="1.6" fill="#f5961e"/>
<rect x="762.7" y="570.8" width="1.6" height="1.6" fill="#f5961e"/>
<rect x="763.8" y="569.3" width="1.6" height="1.6" fill="#f07010"/>
<rect x="765.5" y="568.6" width="1.6" height="1.6" fill="#f07010"/>
<rect x="767.5" y="569.4" width="1.6" height="1.6" fill="#f5961e"/>
<rect x="768.0" y="568.6" width="1.6" height="1.6" fill="#f07010"/>
<rect x="771.1" y="567.3" width="1.6" height="1.6" fill="#f07010"/>
<rect x="772.1" y="568.0" width="1.6" height="1.6" fill="#f07010"/>
<rect x="773.4" y="566.6" width="1.6" height="1.6" fill="#f5961e"/>
<rect x="774.9" y="566.3" width="1.6" height="1.6" fill="#f07010"/>
<rect x="776.3" y="565.9" width="1.6" height="1.6" fill="#f5961e"/>
<rect x="882.4" y="364.2" width="1.6" height="1.6" fill="#ec8010"/>
<rect x="886.0" y="362.9" width="1.6" height="1.6" fill="#ec8010"/>
<rect x="887.3" y="362.3" width="1.6" height="1.6" fill="#f5961e"/>
<rect x="886.7" y="360.7" width="1.6" height="1.6" fill="#ec8010"/>
<rect x="887.6" y="360.5" width="1.6" height="1.6" fill="#f08c14"/>
<rect x="889.8" y="553.5" width="1.6" height="1.6" fill="#e03a10"/>
<rect x="905.3" y="563.4" width="1.6" height="1.6" fill="#e03a10"/>
<polyline points="1134.3,725.1 1132.1,732.2 1129.9,737.7 1128.8,742.1" fill="none" stroke="#f08c14" stroke-width="1.4" stroke-linejoin="round"/></g><g><line x1="853.1" y1="528.2" x2="853.1" y2="362" stroke="#ff0000" stroke-width="4.2"/>
<line x1="853.1" y1="528.4" x2="686" y2="528.4" stroke="#00ee00" stroke-width="4.4"/>
<line x1="848.6" y1="483.3" x2="850.3" y2="451" stroke="#ff0000" stroke-width="2.2"/>
<line x1="848.9" y1="483.5" x2="815.5" y2="483" stroke="#00ee00" stroke-width="3.2"/>
<circle cx="848.9" cy="483.3" r="1.9" fill="#0000ff"/>
<polygon points="849,486 846.5,501 851.5,501" fill="#e01890"/>
<line x1="854.4" y1="545" x2="855.3" y2="576" stroke="#e8e040" stroke-width="1"/>
<line x1="855.3" y1="578.2" x2="856.5" y2="609.7" stroke="#ff0000" stroke-width="3.4"/>
<line x1="855.3" y1="577" x2="888.9" y2="576" stroke="#00ee00" stroke-width="3.2"/>
<circle cx="855.3" cy="578.2" r="2.2" fill="#0000ff"/>
<g font-family="Liberation Sans" font-size="13" fill="#ffffff">
<text x="836" y="497">map</text>
<text x="845" y="590">nav</text>
<text x="786" y="541" font-size="12.5" fill-opacity="0.9">cloud</text>
<text x="797" y="541" font-size="12.5" fill-opacity="0.9">scan</text>
<text x="808" y="541" font-size="12.5" fill-opacity="0.9">odom</text>
<text x="822" y="541" font-size="12.5" fill-opacity="0.9">BASE</text>
<text x="840" y="541" font-size="12.5" fill-opacity="0.9">BASE</text>
<text x="852" y="541" font-size="12.5" fill-opacity="0.9">velo</text>
<text x="866" y="541" font-size="12.5" fill-opacity="0.9">imu</text>
<text x="874" y="541" font-size="12.5" fill-opacity="0.9">naleT</text>
<text x="909" y="541" font-size="12.5" fill-opacity="0.9">1</text>
</g>
<line x1="853.1" y1="486" x2="853.1" y2="500" stroke="#ff0000" stroke-width="4.2"/>
<polygon points="853.5,531.7 850.8,545.4 856.2,545.4" fill="#e01890"/>
<circle cx="853.1" cy="528.2" r="3" fill="#0000ff"/></g>
</svg>
</div>
</body></html>
